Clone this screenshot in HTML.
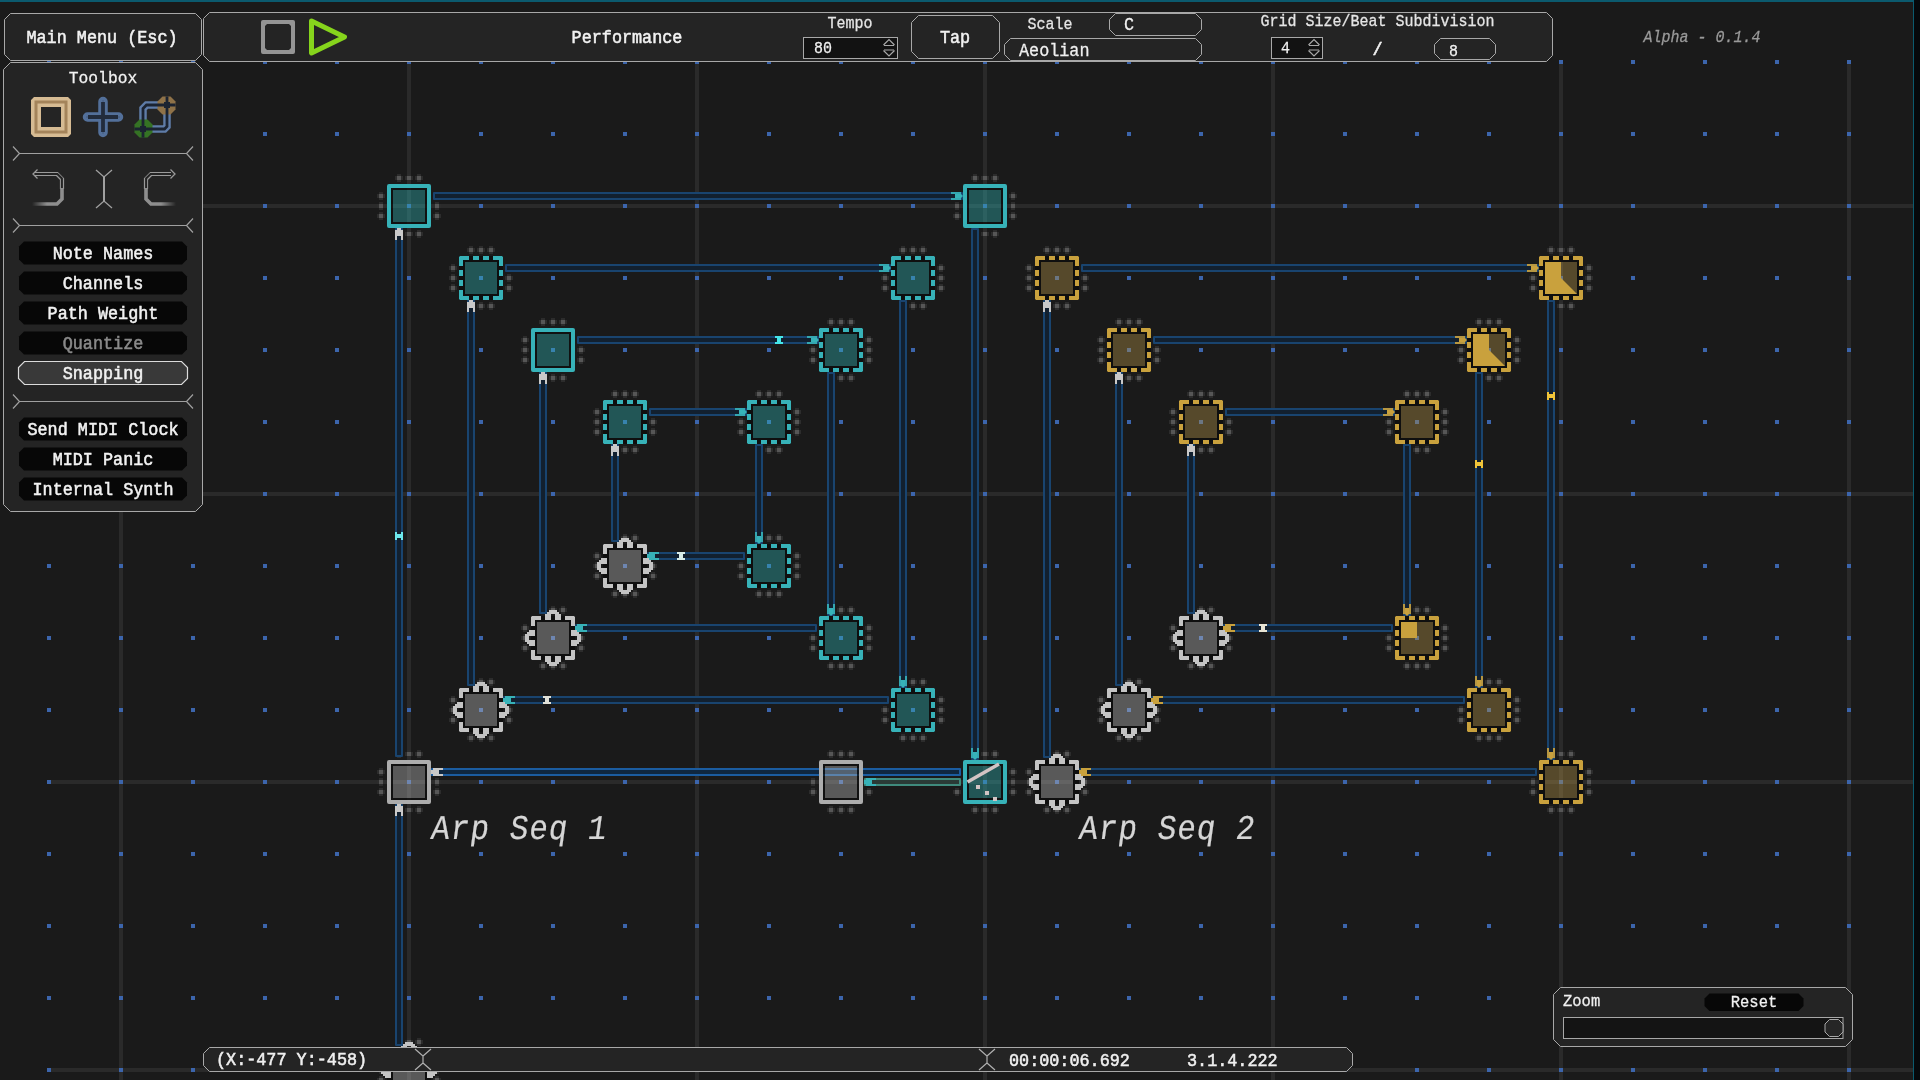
<!DOCTYPE html><html><head><meta charset="utf-8"><style>html,body{margin:0;padding:0;background:#1a1a1a;width:1920px;height:1080px;overflow:hidden}svg{display:block}text{font-family:"Liberation Mono",monospace;white-space:pre}svg{will-change:transform}</style></head><body>
<svg width="1920" height="1080" viewBox="0 0 1920 1080">
<rect x="0" y="0" width="1920" height="1080" fill="#1a1a1a" />
<g shape-rendering="crispEdges">
<rect x="119" y="60" width="4" height="1020" fill="#2a2a2a" />
<rect x="407" y="60" width="4" height="1020" fill="#2a2a2a" />
<rect x="695" y="60" width="4" height="1020" fill="#2a2a2a" />
<rect x="983" y="60" width="4" height="1020" fill="#2a2a2a" />
<rect x="1271" y="60" width="4" height="1020" fill="#2a2a2a" />
<rect x="1559" y="60" width="4" height="1020" fill="#2a2a2a" />
<rect x="1847" y="60" width="4" height="1020" fill="#2a2a2a" />
<rect x="47" y="204" width="1866" height="4" fill="#2a2a2a" />
<rect x="47" y="492" width="1866" height="4" fill="#2a2a2a" />
<rect x="47" y="780" width="1866" height="4" fill="#2a2a2a" />
<rect x="47" y="1068" width="1866" height="4" fill="#2a2a2a" />
<rect x="47" y="60" width="4" height="4" fill="#3c65ac" />
<rect x="47" y="132" width="4" height="4" fill="#3c65ac" />
<rect x="47" y="204" width="4" height="4" fill="#3c65ac" />
<rect x="47" y="276" width="4" height="4" fill="#3c65ac" />
<rect x="47" y="348" width="4" height="4" fill="#3c65ac" />
<rect x="47" y="420" width="4" height="4" fill="#3c65ac" />
<rect x="47" y="492" width="4" height="4" fill="#3c65ac" />
<rect x="47" y="564" width="4" height="4" fill="#3c65ac" />
<rect x="47" y="636" width="4" height="4" fill="#3c65ac" />
<rect x="47" y="708" width="4" height="4" fill="#3c65ac" />
<rect x="47" y="780" width="4" height="4" fill="#3c65ac" />
<rect x="47" y="852" width="4" height="4" fill="#3c65ac" />
<rect x="47" y="924" width="4" height="4" fill="#3c65ac" />
<rect x="47" y="996" width="4" height="4" fill="#3c65ac" />
<rect x="47" y="1068" width="4" height="4" fill="#3c65ac" />
<rect x="119" y="60" width="4" height="4" fill="#3c65ac" />
<rect x="119" y="132" width="4" height="4" fill="#3c65ac" />
<rect x="119" y="204" width="4" height="4" fill="#3c65ac" />
<rect x="119" y="276" width="4" height="4" fill="#3c65ac" />
<rect x="119" y="348" width="4" height="4" fill="#3c65ac" />
<rect x="119" y="420" width="4" height="4" fill="#3c65ac" />
<rect x="119" y="492" width="4" height="4" fill="#3c65ac" />
<rect x="119" y="564" width="4" height="4" fill="#3c65ac" />
<rect x="119" y="636" width="4" height="4" fill="#3c65ac" />
<rect x="119" y="708" width="4" height="4" fill="#3c65ac" />
<rect x="119" y="780" width="4" height="4" fill="#3c65ac" />
<rect x="119" y="852" width="4" height="4" fill="#3c65ac" />
<rect x="119" y="924" width="4" height="4" fill="#3c65ac" />
<rect x="119" y="996" width="4" height="4" fill="#3c65ac" />
<rect x="119" y="1068" width="4" height="4" fill="#3c65ac" />
<rect x="191" y="60" width="4" height="4" fill="#3c65ac" />
<rect x="191" y="132" width="4" height="4" fill="#3c65ac" />
<rect x="191" y="204" width="4" height="4" fill="#3c65ac" />
<rect x="191" y="276" width="4" height="4" fill="#3c65ac" />
<rect x="191" y="348" width="4" height="4" fill="#3c65ac" />
<rect x="191" y="420" width="4" height="4" fill="#3c65ac" />
<rect x="191" y="492" width="4" height="4" fill="#3c65ac" />
<rect x="191" y="564" width="4" height="4" fill="#3c65ac" />
<rect x="191" y="636" width="4" height="4" fill="#3c65ac" />
<rect x="191" y="708" width="4" height="4" fill="#3c65ac" />
<rect x="191" y="780" width="4" height="4" fill="#3c65ac" />
<rect x="191" y="852" width="4" height="4" fill="#3c65ac" />
<rect x="191" y="924" width="4" height="4" fill="#3c65ac" />
<rect x="191" y="996" width="4" height="4" fill="#3c65ac" />
<rect x="191" y="1068" width="4" height="4" fill="#3c65ac" />
<rect x="263" y="60" width="4" height="4" fill="#3c65ac" />
<rect x="263" y="132" width="4" height="4" fill="#3c65ac" />
<rect x="263" y="204" width="4" height="4" fill="#3c65ac" />
<rect x="263" y="276" width="4" height="4" fill="#3c65ac" />
<rect x="263" y="348" width="4" height="4" fill="#3c65ac" />
<rect x="263" y="420" width="4" height="4" fill="#3c65ac" />
<rect x="263" y="492" width="4" height="4" fill="#3c65ac" />
<rect x="263" y="564" width="4" height="4" fill="#3c65ac" />
<rect x="263" y="636" width="4" height="4" fill="#3c65ac" />
<rect x="263" y="708" width="4" height="4" fill="#3c65ac" />
<rect x="263" y="780" width="4" height="4" fill="#3c65ac" />
<rect x="263" y="852" width="4" height="4" fill="#3c65ac" />
<rect x="263" y="924" width="4" height="4" fill="#3c65ac" />
<rect x="263" y="996" width="4" height="4" fill="#3c65ac" />
<rect x="263" y="1068" width="4" height="4" fill="#3c65ac" />
<rect x="335" y="60" width="4" height="4" fill="#3c65ac" />
<rect x="335" y="132" width="4" height="4" fill="#3c65ac" />
<rect x="335" y="204" width="4" height="4" fill="#3c65ac" />
<rect x="335" y="276" width="4" height="4" fill="#3c65ac" />
<rect x="335" y="348" width="4" height="4" fill="#3c65ac" />
<rect x="335" y="420" width="4" height="4" fill="#3c65ac" />
<rect x="335" y="492" width="4" height="4" fill="#3c65ac" />
<rect x="335" y="564" width="4" height="4" fill="#3c65ac" />
<rect x="335" y="636" width="4" height="4" fill="#3c65ac" />
<rect x="335" y="708" width="4" height="4" fill="#3c65ac" />
<rect x="335" y="780" width="4" height="4" fill="#3c65ac" />
<rect x="335" y="852" width="4" height="4" fill="#3c65ac" />
<rect x="335" y="924" width="4" height="4" fill="#3c65ac" />
<rect x="335" y="996" width="4" height="4" fill="#3c65ac" />
<rect x="335" y="1068" width="4" height="4" fill="#3c65ac" />
<rect x="407" y="60" width="4" height="4" fill="#3c65ac" />
<rect x="407" y="132" width="4" height="4" fill="#3c65ac" />
<rect x="407" y="204" width="4" height="4" fill="#3c65ac" />
<rect x="407" y="276" width="4" height="4" fill="#3c65ac" />
<rect x="407" y="348" width="4" height="4" fill="#3c65ac" />
<rect x="407" y="420" width="4" height="4" fill="#3c65ac" />
<rect x="407" y="492" width="4" height="4" fill="#3c65ac" />
<rect x="407" y="564" width="4" height="4" fill="#3c65ac" />
<rect x="407" y="636" width="4" height="4" fill="#3c65ac" />
<rect x="407" y="708" width="4" height="4" fill="#3c65ac" />
<rect x="407" y="780" width="4" height="4" fill="#3c65ac" />
<rect x="407" y="852" width="4" height="4" fill="#3c65ac" />
<rect x="407" y="924" width="4" height="4" fill="#3c65ac" />
<rect x="407" y="996" width="4" height="4" fill="#3c65ac" />
<rect x="407" y="1068" width="4" height="4" fill="#3c65ac" />
<rect x="479" y="60" width="4" height="4" fill="#3c65ac" />
<rect x="479" y="132" width="4" height="4" fill="#3c65ac" />
<rect x="479" y="204" width="4" height="4" fill="#3c65ac" />
<rect x="479" y="276" width="4" height="4" fill="#3c65ac" />
<rect x="479" y="348" width="4" height="4" fill="#3c65ac" />
<rect x="479" y="420" width="4" height="4" fill="#3c65ac" />
<rect x="479" y="492" width="4" height="4" fill="#3c65ac" />
<rect x="479" y="564" width="4" height="4" fill="#3c65ac" />
<rect x="479" y="636" width="4" height="4" fill="#3c65ac" />
<rect x="479" y="708" width="4" height="4" fill="#3c65ac" />
<rect x="479" y="780" width="4" height="4" fill="#3c65ac" />
<rect x="479" y="852" width="4" height="4" fill="#3c65ac" />
<rect x="479" y="924" width="4" height="4" fill="#3c65ac" />
<rect x="479" y="996" width="4" height="4" fill="#3c65ac" />
<rect x="479" y="1068" width="4" height="4" fill="#3c65ac" />
<rect x="551" y="60" width="4" height="4" fill="#3c65ac" />
<rect x="551" y="132" width="4" height="4" fill="#3c65ac" />
<rect x="551" y="204" width="4" height="4" fill="#3c65ac" />
<rect x="551" y="276" width="4" height="4" fill="#3c65ac" />
<rect x="551" y="348" width="4" height="4" fill="#3c65ac" />
<rect x="551" y="420" width="4" height="4" fill="#3c65ac" />
<rect x="551" y="492" width="4" height="4" fill="#3c65ac" />
<rect x="551" y="564" width="4" height="4" fill="#3c65ac" />
<rect x="551" y="636" width="4" height="4" fill="#3c65ac" />
<rect x="551" y="708" width="4" height="4" fill="#3c65ac" />
<rect x="551" y="780" width="4" height="4" fill="#3c65ac" />
<rect x="551" y="852" width="4" height="4" fill="#3c65ac" />
<rect x="551" y="924" width="4" height="4" fill="#3c65ac" />
<rect x="551" y="996" width="4" height="4" fill="#3c65ac" />
<rect x="551" y="1068" width="4" height="4" fill="#3c65ac" />
<rect x="623" y="60" width="4" height="4" fill="#3c65ac" />
<rect x="623" y="132" width="4" height="4" fill="#3c65ac" />
<rect x="623" y="204" width="4" height="4" fill="#3c65ac" />
<rect x="623" y="276" width="4" height="4" fill="#3c65ac" />
<rect x="623" y="348" width="4" height="4" fill="#3c65ac" />
<rect x="623" y="420" width="4" height="4" fill="#3c65ac" />
<rect x="623" y="492" width="4" height="4" fill="#3c65ac" />
<rect x="623" y="564" width="4" height="4" fill="#3c65ac" />
<rect x="623" y="636" width="4" height="4" fill="#3c65ac" />
<rect x="623" y="708" width="4" height="4" fill="#3c65ac" />
<rect x="623" y="780" width="4" height="4" fill="#3c65ac" />
<rect x="623" y="852" width="4" height="4" fill="#3c65ac" />
<rect x="623" y="924" width="4" height="4" fill="#3c65ac" />
<rect x="623" y="996" width="4" height="4" fill="#3c65ac" />
<rect x="623" y="1068" width="4" height="4" fill="#3c65ac" />
<rect x="695" y="60" width="4" height="4" fill="#3c65ac" />
<rect x="695" y="132" width="4" height="4" fill="#3c65ac" />
<rect x="695" y="204" width="4" height="4" fill="#3c65ac" />
<rect x="695" y="276" width="4" height="4" fill="#3c65ac" />
<rect x="695" y="348" width="4" height="4" fill="#3c65ac" />
<rect x="695" y="420" width="4" height="4" fill="#3c65ac" />
<rect x="695" y="492" width="4" height="4" fill="#3c65ac" />
<rect x="695" y="564" width="4" height="4" fill="#3c65ac" />
<rect x="695" y="636" width="4" height="4" fill="#3c65ac" />
<rect x="695" y="708" width="4" height="4" fill="#3c65ac" />
<rect x="695" y="780" width="4" height="4" fill="#3c65ac" />
<rect x="695" y="852" width="4" height="4" fill="#3c65ac" />
<rect x="695" y="924" width="4" height="4" fill="#3c65ac" />
<rect x="695" y="996" width="4" height="4" fill="#3c65ac" />
<rect x="695" y="1068" width="4" height="4" fill="#3c65ac" />
<rect x="767" y="60" width="4" height="4" fill="#3c65ac" />
<rect x="767" y="132" width="4" height="4" fill="#3c65ac" />
<rect x="767" y="204" width="4" height="4" fill="#3c65ac" />
<rect x="767" y="276" width="4" height="4" fill="#3c65ac" />
<rect x="767" y="348" width="4" height="4" fill="#3c65ac" />
<rect x="767" y="420" width="4" height="4" fill="#3c65ac" />
<rect x="767" y="492" width="4" height="4" fill="#3c65ac" />
<rect x="767" y="564" width="4" height="4" fill="#3c65ac" />
<rect x="767" y="636" width="4" height="4" fill="#3c65ac" />
<rect x="767" y="708" width="4" height="4" fill="#3c65ac" />
<rect x="767" y="780" width="4" height="4" fill="#3c65ac" />
<rect x="767" y="852" width="4" height="4" fill="#3c65ac" />
<rect x="767" y="924" width="4" height="4" fill="#3c65ac" />
<rect x="767" y="996" width="4" height="4" fill="#3c65ac" />
<rect x="767" y="1068" width="4" height="4" fill="#3c65ac" />
<rect x="839" y="60" width="4" height="4" fill="#3c65ac" />
<rect x="839" y="132" width="4" height="4" fill="#3c65ac" />
<rect x="839" y="204" width="4" height="4" fill="#3c65ac" />
<rect x="839" y="276" width="4" height="4" fill="#3c65ac" />
<rect x="839" y="348" width="4" height="4" fill="#3c65ac" />
<rect x="839" y="420" width="4" height="4" fill="#3c65ac" />
<rect x="839" y="492" width="4" height="4" fill="#3c65ac" />
<rect x="839" y="564" width="4" height="4" fill="#3c65ac" />
<rect x="839" y="636" width="4" height="4" fill="#3c65ac" />
<rect x="839" y="708" width="4" height="4" fill="#3c65ac" />
<rect x="839" y="780" width="4" height="4" fill="#3c65ac" />
<rect x="839" y="852" width="4" height="4" fill="#3c65ac" />
<rect x="839" y="924" width="4" height="4" fill="#3c65ac" />
<rect x="839" y="996" width="4" height="4" fill="#3c65ac" />
<rect x="839" y="1068" width="4" height="4" fill="#3c65ac" />
<rect x="911" y="60" width="4" height="4" fill="#3c65ac" />
<rect x="911" y="132" width="4" height="4" fill="#3c65ac" />
<rect x="911" y="204" width="4" height="4" fill="#3c65ac" />
<rect x="911" y="276" width="4" height="4" fill="#3c65ac" />
<rect x="911" y="348" width="4" height="4" fill="#3c65ac" />
<rect x="911" y="420" width="4" height="4" fill="#3c65ac" />
<rect x="911" y="492" width="4" height="4" fill="#3c65ac" />
<rect x="911" y="564" width="4" height="4" fill="#3c65ac" />
<rect x="911" y="636" width="4" height="4" fill="#3c65ac" />
<rect x="911" y="708" width="4" height="4" fill="#3c65ac" />
<rect x="911" y="780" width="4" height="4" fill="#3c65ac" />
<rect x="911" y="852" width="4" height="4" fill="#3c65ac" />
<rect x="911" y="924" width="4" height="4" fill="#3c65ac" />
<rect x="911" y="996" width="4" height="4" fill="#3c65ac" />
<rect x="911" y="1068" width="4" height="4" fill="#3c65ac" />
<rect x="983" y="60" width="4" height="4" fill="#3c65ac" />
<rect x="983" y="132" width="4" height="4" fill="#3c65ac" />
<rect x="983" y="204" width="4" height="4" fill="#3c65ac" />
<rect x="983" y="276" width="4" height="4" fill="#3c65ac" />
<rect x="983" y="348" width="4" height="4" fill="#3c65ac" />
<rect x="983" y="420" width="4" height="4" fill="#3c65ac" />
<rect x="983" y="492" width="4" height="4" fill="#3c65ac" />
<rect x="983" y="564" width="4" height="4" fill="#3c65ac" />
<rect x="983" y="636" width="4" height="4" fill="#3c65ac" />
<rect x="983" y="708" width="4" height="4" fill="#3c65ac" />
<rect x="983" y="780" width="4" height="4" fill="#3c65ac" />
<rect x="983" y="852" width="4" height="4" fill="#3c65ac" />
<rect x="983" y="924" width="4" height="4" fill="#3c65ac" />
<rect x="983" y="996" width="4" height="4" fill="#3c65ac" />
<rect x="983" y="1068" width="4" height="4" fill="#3c65ac" />
<rect x="1055" y="60" width="4" height="4" fill="#3c65ac" />
<rect x="1055" y="132" width="4" height="4" fill="#3c65ac" />
<rect x="1055" y="204" width="4" height="4" fill="#3c65ac" />
<rect x="1055" y="276" width="4" height="4" fill="#3c65ac" />
<rect x="1055" y="348" width="4" height="4" fill="#3c65ac" />
<rect x="1055" y="420" width="4" height="4" fill="#3c65ac" />
<rect x="1055" y="492" width="4" height="4" fill="#3c65ac" />
<rect x="1055" y="564" width="4" height="4" fill="#3c65ac" />
<rect x="1055" y="636" width="4" height="4" fill="#3c65ac" />
<rect x="1055" y="708" width="4" height="4" fill="#3c65ac" />
<rect x="1055" y="780" width="4" height="4" fill="#3c65ac" />
<rect x="1055" y="852" width="4" height="4" fill="#3c65ac" />
<rect x="1055" y="924" width="4" height="4" fill="#3c65ac" />
<rect x="1055" y="996" width="4" height="4" fill="#3c65ac" />
<rect x="1055" y="1068" width="4" height="4" fill="#3c65ac" />
<rect x="1127" y="60" width="4" height="4" fill="#3c65ac" />
<rect x="1127" y="132" width="4" height="4" fill="#3c65ac" />
<rect x="1127" y="204" width="4" height="4" fill="#3c65ac" />
<rect x="1127" y="276" width="4" height="4" fill="#3c65ac" />
<rect x="1127" y="348" width="4" height="4" fill="#3c65ac" />
<rect x="1127" y="420" width="4" height="4" fill="#3c65ac" />
<rect x="1127" y="492" width="4" height="4" fill="#3c65ac" />
<rect x="1127" y="564" width="4" height="4" fill="#3c65ac" />
<rect x="1127" y="636" width="4" height="4" fill="#3c65ac" />
<rect x="1127" y="708" width="4" height="4" fill="#3c65ac" />
<rect x="1127" y="780" width="4" height="4" fill="#3c65ac" />
<rect x="1127" y="852" width="4" height="4" fill="#3c65ac" />
<rect x="1127" y="924" width="4" height="4" fill="#3c65ac" />
<rect x="1127" y="996" width="4" height="4" fill="#3c65ac" />
<rect x="1127" y="1068" width="4" height="4" fill="#3c65ac" />
<rect x="1199" y="60" width="4" height="4" fill="#3c65ac" />
<rect x="1199" y="132" width="4" height="4" fill="#3c65ac" />
<rect x="1199" y="204" width="4" height="4" fill="#3c65ac" />
<rect x="1199" y="276" width="4" height="4" fill="#3c65ac" />
<rect x="1199" y="348" width="4" height="4" fill="#3c65ac" />
<rect x="1199" y="420" width="4" height="4" fill="#3c65ac" />
<rect x="1199" y="492" width="4" height="4" fill="#3c65ac" />
<rect x="1199" y="564" width="4" height="4" fill="#3c65ac" />
<rect x="1199" y="636" width="4" height="4" fill="#3c65ac" />
<rect x="1199" y="708" width="4" height="4" fill="#3c65ac" />
<rect x="1199" y="780" width="4" height="4" fill="#3c65ac" />
<rect x="1199" y="852" width="4" height="4" fill="#3c65ac" />
<rect x="1199" y="924" width="4" height="4" fill="#3c65ac" />
<rect x="1199" y="996" width="4" height="4" fill="#3c65ac" />
<rect x="1199" y="1068" width="4" height="4" fill="#3c65ac" />
<rect x="1271" y="60" width="4" height="4" fill="#3c65ac" />
<rect x="1271" y="132" width="4" height="4" fill="#3c65ac" />
<rect x="1271" y="204" width="4" height="4" fill="#3c65ac" />
<rect x="1271" y="276" width="4" height="4" fill="#3c65ac" />
<rect x="1271" y="348" width="4" height="4" fill="#3c65ac" />
<rect x="1271" y="420" width="4" height="4" fill="#3c65ac" />
<rect x="1271" y="492" width="4" height="4" fill="#3c65ac" />
<rect x="1271" y="564" width="4" height="4" fill="#3c65ac" />
<rect x="1271" y="636" width="4" height="4" fill="#3c65ac" />
<rect x="1271" y="708" width="4" height="4" fill="#3c65ac" />
<rect x="1271" y="780" width="4" height="4" fill="#3c65ac" />
<rect x="1271" y="852" width="4" height="4" fill="#3c65ac" />
<rect x="1271" y="924" width="4" height="4" fill="#3c65ac" />
<rect x="1271" y="996" width="4" height="4" fill="#3c65ac" />
<rect x="1271" y="1068" width="4" height="4" fill="#3c65ac" />
<rect x="1343" y="60" width="4" height="4" fill="#3c65ac" />
<rect x="1343" y="132" width="4" height="4" fill="#3c65ac" />
<rect x="1343" y="204" width="4" height="4" fill="#3c65ac" />
<rect x="1343" y="276" width="4" height="4" fill="#3c65ac" />
<rect x="1343" y="348" width="4" height="4" fill="#3c65ac" />
<rect x="1343" y="420" width="4" height="4" fill="#3c65ac" />
<rect x="1343" y="492" width="4" height="4" fill="#3c65ac" />
<rect x="1343" y="564" width="4" height="4" fill="#3c65ac" />
<rect x="1343" y="636" width="4" height="4" fill="#3c65ac" />
<rect x="1343" y="708" width="4" height="4" fill="#3c65ac" />
<rect x="1343" y="780" width="4" height="4" fill="#3c65ac" />
<rect x="1343" y="852" width="4" height="4" fill="#3c65ac" />
<rect x="1343" y="924" width="4" height="4" fill="#3c65ac" />
<rect x="1343" y="996" width="4" height="4" fill="#3c65ac" />
<rect x="1343" y="1068" width="4" height="4" fill="#3c65ac" />
<rect x="1415" y="60" width="4" height="4" fill="#3c65ac" />
<rect x="1415" y="132" width="4" height="4" fill="#3c65ac" />
<rect x="1415" y="204" width="4" height="4" fill="#3c65ac" />
<rect x="1415" y="276" width="4" height="4" fill="#3c65ac" />
<rect x="1415" y="348" width="4" height="4" fill="#3c65ac" />
<rect x="1415" y="420" width="4" height="4" fill="#3c65ac" />
<rect x="1415" y="492" width="4" height="4" fill="#3c65ac" />
<rect x="1415" y="564" width="4" height="4" fill="#3c65ac" />
<rect x="1415" y="636" width="4" height="4" fill="#3c65ac" />
<rect x="1415" y="708" width="4" height="4" fill="#3c65ac" />
<rect x="1415" y="780" width="4" height="4" fill="#3c65ac" />
<rect x="1415" y="852" width="4" height="4" fill="#3c65ac" />
<rect x="1415" y="924" width="4" height="4" fill="#3c65ac" />
<rect x="1415" y="996" width="4" height="4" fill="#3c65ac" />
<rect x="1415" y="1068" width="4" height="4" fill="#3c65ac" />
<rect x="1487" y="60" width="4" height="4" fill="#3c65ac" />
<rect x="1487" y="132" width="4" height="4" fill="#3c65ac" />
<rect x="1487" y="204" width="4" height="4" fill="#3c65ac" />
<rect x="1487" y="276" width="4" height="4" fill="#3c65ac" />
<rect x="1487" y="348" width="4" height="4" fill="#3c65ac" />
<rect x="1487" y="420" width="4" height="4" fill="#3c65ac" />
<rect x="1487" y="492" width="4" height="4" fill="#3c65ac" />
<rect x="1487" y="564" width="4" height="4" fill="#3c65ac" />
<rect x="1487" y="636" width="4" height="4" fill="#3c65ac" />
<rect x="1487" y="708" width="4" height="4" fill="#3c65ac" />
<rect x="1487" y="780" width="4" height="4" fill="#3c65ac" />
<rect x="1487" y="852" width="4" height="4" fill="#3c65ac" />
<rect x="1487" y="924" width="4" height="4" fill="#3c65ac" />
<rect x="1487" y="996" width="4" height="4" fill="#3c65ac" />
<rect x="1487" y="1068" width="4" height="4" fill="#3c65ac" />
<rect x="1559" y="60" width="4" height="4" fill="#3c65ac" />
<rect x="1559" y="132" width="4" height="4" fill="#3c65ac" />
<rect x="1559" y="204" width="4" height="4" fill="#3c65ac" />
<rect x="1559" y="276" width="4" height="4" fill="#3c65ac" />
<rect x="1559" y="348" width="4" height="4" fill="#3c65ac" />
<rect x="1559" y="420" width="4" height="4" fill="#3c65ac" />
<rect x="1559" y="492" width="4" height="4" fill="#3c65ac" />
<rect x="1559" y="564" width="4" height="4" fill="#3c65ac" />
<rect x="1559" y="636" width="4" height="4" fill="#3c65ac" />
<rect x="1559" y="708" width="4" height="4" fill="#3c65ac" />
<rect x="1559" y="780" width="4" height="4" fill="#3c65ac" />
<rect x="1559" y="852" width="4" height="4" fill="#3c65ac" />
<rect x="1559" y="924" width="4" height="4" fill="#3c65ac" />
<rect x="1559" y="996" width="4" height="4" fill="#3c65ac" />
<rect x="1559" y="1068" width="4" height="4" fill="#3c65ac" />
<rect x="1631" y="60" width="4" height="4" fill="#3c65ac" />
<rect x="1631" y="132" width="4" height="4" fill="#3c65ac" />
<rect x="1631" y="204" width="4" height="4" fill="#3c65ac" />
<rect x="1631" y="276" width="4" height="4" fill="#3c65ac" />
<rect x="1631" y="348" width="4" height="4" fill="#3c65ac" />
<rect x="1631" y="420" width="4" height="4" fill="#3c65ac" />
<rect x="1631" y="492" width="4" height="4" fill="#3c65ac" />
<rect x="1631" y="564" width="4" height="4" fill="#3c65ac" />
<rect x="1631" y="636" width="4" height="4" fill="#3c65ac" />
<rect x="1631" y="708" width="4" height="4" fill="#3c65ac" />
<rect x="1631" y="780" width="4" height="4" fill="#3c65ac" />
<rect x="1631" y="852" width="4" height="4" fill="#3c65ac" />
<rect x="1631" y="924" width="4" height="4" fill="#3c65ac" />
<rect x="1631" y="996" width="4" height="4" fill="#3c65ac" />
<rect x="1631" y="1068" width="4" height="4" fill="#3c65ac" />
<rect x="1703" y="60" width="4" height="4" fill="#3c65ac" />
<rect x="1703" y="132" width="4" height="4" fill="#3c65ac" />
<rect x="1703" y="204" width="4" height="4" fill="#3c65ac" />
<rect x="1703" y="276" width="4" height="4" fill="#3c65ac" />
<rect x="1703" y="348" width="4" height="4" fill="#3c65ac" />
<rect x="1703" y="420" width="4" height="4" fill="#3c65ac" />
<rect x="1703" y="492" width="4" height="4" fill="#3c65ac" />
<rect x="1703" y="564" width="4" height="4" fill="#3c65ac" />
<rect x="1703" y="636" width="4" height="4" fill="#3c65ac" />
<rect x="1703" y="708" width="4" height="4" fill="#3c65ac" />
<rect x="1703" y="780" width="4" height="4" fill="#3c65ac" />
<rect x="1703" y="852" width="4" height="4" fill="#3c65ac" />
<rect x="1703" y="924" width="4" height="4" fill="#3c65ac" />
<rect x="1703" y="996" width="4" height="4" fill="#3c65ac" />
<rect x="1703" y="1068" width="4" height="4" fill="#3c65ac" />
<rect x="1775" y="60" width="4" height="4" fill="#3c65ac" />
<rect x="1775" y="132" width="4" height="4" fill="#3c65ac" />
<rect x="1775" y="204" width="4" height="4" fill="#3c65ac" />
<rect x="1775" y="276" width="4" height="4" fill="#3c65ac" />
<rect x="1775" y="348" width="4" height="4" fill="#3c65ac" />
<rect x="1775" y="420" width="4" height="4" fill="#3c65ac" />
<rect x="1775" y="492" width="4" height="4" fill="#3c65ac" />
<rect x="1775" y="564" width="4" height="4" fill="#3c65ac" />
<rect x="1775" y="636" width="4" height="4" fill="#3c65ac" />
<rect x="1775" y="708" width="4" height="4" fill="#3c65ac" />
<rect x="1775" y="780" width="4" height="4" fill="#3c65ac" />
<rect x="1775" y="852" width="4" height="4" fill="#3c65ac" />
<rect x="1775" y="924" width="4" height="4" fill="#3c65ac" />
<rect x="1775" y="996" width="4" height="4" fill="#3c65ac" />
<rect x="1775" y="1068" width="4" height="4" fill="#3c65ac" />
<rect x="1847" y="60" width="4" height="4" fill="#3c65ac" />
<rect x="1847" y="132" width="4" height="4" fill="#3c65ac" />
<rect x="1847" y="204" width="4" height="4" fill="#3c65ac" />
<rect x="1847" y="276" width="4" height="4" fill="#3c65ac" />
<rect x="1847" y="348" width="4" height="4" fill="#3c65ac" />
<rect x="1847" y="420" width="4" height="4" fill="#3c65ac" />
<rect x="1847" y="492" width="4" height="4" fill="#3c65ac" />
<rect x="1847" y="564" width="4" height="4" fill="#3c65ac" />
<rect x="1847" y="636" width="4" height="4" fill="#3c65ac" />
<rect x="1847" y="708" width="4" height="4" fill="#3c65ac" />
<rect x="1847" y="780" width="4" height="4" fill="#3c65ac" />
<rect x="1847" y="852" width="4" height="4" fill="#3c65ac" />
<rect x="1847" y="924" width="4" height="4" fill="#3c65ac" />
<rect x="1847" y="996" width="4" height="4" fill="#3c65ac" />
<rect x="1847" y="1068" width="4" height="4" fill="#3c65ac" />
<rect x="1919" y="60" width="4" height="4" fill="#3c65ac" />
<rect x="1919" y="132" width="4" height="4" fill="#3c65ac" />
<rect x="1919" y="204" width="4" height="4" fill="#3c65ac" />
<rect x="1919" y="276" width="4" height="4" fill="#3c65ac" />
<rect x="1919" y="348" width="4" height="4" fill="#3c65ac" />
<rect x="1919" y="420" width="4" height="4" fill="#3c65ac" />
<rect x="1919" y="492" width="4" height="4" fill="#3c65ac" />
<rect x="1919" y="564" width="4" height="4" fill="#3c65ac" />
<rect x="1919" y="636" width="4" height="4" fill="#3c65ac" />
<rect x="1919" y="708" width="4" height="4" fill="#3c65ac" />
<rect x="1919" y="780" width="4" height="4" fill="#3c65ac" />
<rect x="1919" y="852" width="4" height="4" fill="#3c65ac" />
<rect x="1919" y="924" width="4" height="4" fill="#3c65ac" />
<rect x="1919" y="996" width="4" height="4" fill="#3c65ac" />
<rect x="1919" y="1068" width="4" height="4" fill="#3c65ac" />
</g>
<rect x="395" y="176" width="8" height="4" fill="#2c2c2c" />
<rect x="397" y="174" width="4" height="8" fill="#2c2c2c" />
<rect x="397" y="176" width="4" height="4" fill="#565656" />
<rect x="405" y="176" width="8" height="4" fill="#2c2c2c" />
<rect x="407" y="174" width="4" height="8" fill="#2c2c2c" />
<rect x="407" y="176" width="4" height="4" fill="#565656" />
<rect x="415" y="176" width="8" height="4" fill="#2c2c2c" />
<rect x="417" y="174" width="4" height="8" fill="#2c2c2c" />
<rect x="417" y="176" width="4" height="4" fill="#565656" />
<rect x="395" y="232" width="8" height="4" fill="#2c2c2c" />
<rect x="397" y="230" width="4" height="8" fill="#2c2c2c" />
<rect x="397" y="232" width="4" height="4" fill="#565656" />
<rect x="405" y="232" width="8" height="4" fill="#2c2c2c" />
<rect x="407" y="230" width="4" height="8" fill="#2c2c2c" />
<rect x="407" y="232" width="4" height="4" fill="#565656" />
<rect x="415" y="232" width="8" height="4" fill="#2c2c2c" />
<rect x="417" y="230" width="4" height="8" fill="#2c2c2c" />
<rect x="417" y="232" width="4" height="4" fill="#565656" />
<rect x="377" y="194" width="8" height="4" fill="#2c2c2c" />
<rect x="379" y="192" width="4" height="8" fill="#2c2c2c" />
<rect x="379" y="194" width="4" height="4" fill="#565656" />
<rect x="377" y="204" width="8" height="4" fill="#2c2c2c" />
<rect x="379" y="202" width="4" height="8" fill="#2c2c2c" />
<rect x="379" y="204" width="4" height="4" fill="#565656" />
<rect x="377" y="214" width="8" height="4" fill="#2c2c2c" />
<rect x="379" y="212" width="4" height="8" fill="#2c2c2c" />
<rect x="379" y="214" width="4" height="4" fill="#565656" />
<rect x="433" y="194" width="8" height="4" fill="#2c2c2c" />
<rect x="435" y="192" width="4" height="8" fill="#2c2c2c" />
<rect x="435" y="194" width="4" height="4" fill="#565656" />
<rect x="433" y="204" width="8" height="4" fill="#2c2c2c" />
<rect x="435" y="202" width="4" height="8" fill="#2c2c2c" />
<rect x="435" y="204" width="4" height="4" fill="#565656" />
<rect x="433" y="214" width="8" height="4" fill="#2c2c2c" />
<rect x="435" y="212" width="4" height="8" fill="#2c2c2c" />
<rect x="435" y="214" width="4" height="4" fill="#565656" />
<rect x="971" y="176" width="8" height="4" fill="#2c2c2c" />
<rect x="973" y="174" width="4" height="8" fill="#2c2c2c" />
<rect x="973" y="176" width="4" height="4" fill="#565656" />
<rect x="981" y="176" width="8" height="4" fill="#2c2c2c" />
<rect x="983" y="174" width="4" height="8" fill="#2c2c2c" />
<rect x="983" y="176" width="4" height="4" fill="#565656" />
<rect x="991" y="176" width="8" height="4" fill="#2c2c2c" />
<rect x="993" y="174" width="4" height="8" fill="#2c2c2c" />
<rect x="993" y="176" width="4" height="4" fill="#565656" />
<rect x="971" y="232" width="8" height="4" fill="#2c2c2c" />
<rect x="973" y="230" width="4" height="8" fill="#2c2c2c" />
<rect x="973" y="232" width="4" height="4" fill="#565656" />
<rect x="981" y="232" width="8" height="4" fill="#2c2c2c" />
<rect x="983" y="230" width="4" height="8" fill="#2c2c2c" />
<rect x="983" y="232" width="4" height="4" fill="#565656" />
<rect x="991" y="232" width="8" height="4" fill="#2c2c2c" />
<rect x="993" y="230" width="4" height="8" fill="#2c2c2c" />
<rect x="993" y="232" width="4" height="4" fill="#565656" />
<rect x="953" y="194" width="8" height="4" fill="#2c2c2c" />
<rect x="955" y="192" width="4" height="8" fill="#2c2c2c" />
<rect x="955" y="194" width="4" height="4" fill="#565656" />
<rect x="953" y="204" width="8" height="4" fill="#2c2c2c" />
<rect x="955" y="202" width="4" height="8" fill="#2c2c2c" />
<rect x="955" y="204" width="4" height="4" fill="#565656" />
<rect x="953" y="214" width="8" height="4" fill="#2c2c2c" />
<rect x="955" y="212" width="4" height="8" fill="#2c2c2c" />
<rect x="955" y="214" width="4" height="4" fill="#565656" />
<rect x="1009" y="194" width="8" height="4" fill="#2c2c2c" />
<rect x="1011" y="192" width="4" height="8" fill="#2c2c2c" />
<rect x="1011" y="194" width="4" height="4" fill="#565656" />
<rect x="1009" y="204" width="8" height="4" fill="#2c2c2c" />
<rect x="1011" y="202" width="4" height="8" fill="#2c2c2c" />
<rect x="1011" y="204" width="4" height="4" fill="#565656" />
<rect x="1009" y="214" width="8" height="4" fill="#2c2c2c" />
<rect x="1011" y="212" width="4" height="8" fill="#2c2c2c" />
<rect x="1011" y="214" width="4" height="4" fill="#565656" />
<rect x="539" y="320" width="8" height="4" fill="#2c2c2c" />
<rect x="541" y="318" width="4" height="8" fill="#2c2c2c" />
<rect x="541" y="320" width="4" height="4" fill="#565656" />
<rect x="549" y="320" width="8" height="4" fill="#2c2c2c" />
<rect x="551" y="318" width="4" height="8" fill="#2c2c2c" />
<rect x="551" y="320" width="4" height="4" fill="#565656" />
<rect x="559" y="320" width="8" height="4" fill="#2c2c2c" />
<rect x="561" y="318" width="4" height="8" fill="#2c2c2c" />
<rect x="561" y="320" width="4" height="4" fill="#565656" />
<rect x="539" y="376" width="8" height="4" fill="#2c2c2c" />
<rect x="541" y="374" width="4" height="8" fill="#2c2c2c" />
<rect x="541" y="376" width="4" height="4" fill="#565656" />
<rect x="549" y="376" width="8" height="4" fill="#2c2c2c" />
<rect x="551" y="374" width="4" height="8" fill="#2c2c2c" />
<rect x="551" y="376" width="4" height="4" fill="#565656" />
<rect x="559" y="376" width="8" height="4" fill="#2c2c2c" />
<rect x="561" y="374" width="4" height="8" fill="#2c2c2c" />
<rect x="561" y="376" width="4" height="4" fill="#565656" />
<rect x="521" y="338" width="8" height="4" fill="#2c2c2c" />
<rect x="523" y="336" width="4" height="8" fill="#2c2c2c" />
<rect x="523" y="338" width="4" height="4" fill="#565656" />
<rect x="521" y="348" width="8" height="4" fill="#2c2c2c" />
<rect x="523" y="346" width="4" height="8" fill="#2c2c2c" />
<rect x="523" y="348" width="4" height="4" fill="#565656" />
<rect x="521" y="358" width="8" height="4" fill="#2c2c2c" />
<rect x="523" y="356" width="4" height="8" fill="#2c2c2c" />
<rect x="523" y="358" width="4" height="4" fill="#565656" />
<rect x="577" y="338" width="8" height="4" fill="#2c2c2c" />
<rect x="579" y="336" width="4" height="8" fill="#2c2c2c" />
<rect x="579" y="338" width="4" height="4" fill="#565656" />
<rect x="577" y="348" width="8" height="4" fill="#2c2c2c" />
<rect x="579" y="346" width="4" height="8" fill="#2c2c2c" />
<rect x="579" y="348" width="4" height="4" fill="#565656" />
<rect x="577" y="358" width="8" height="4" fill="#2c2c2c" />
<rect x="579" y="356" width="4" height="8" fill="#2c2c2c" />
<rect x="579" y="358" width="4" height="4" fill="#565656" />
<rect x="467" y="248" width="8" height="4" fill="#2c2c2c" />
<rect x="469" y="246" width="4" height="8" fill="#2c2c2c" />
<rect x="469" y="248" width="4" height="4" fill="#565656" />
<rect x="477" y="248" width="8" height="4" fill="#2c2c2c" />
<rect x="479" y="246" width="4" height="8" fill="#2c2c2c" />
<rect x="479" y="248" width="4" height="4" fill="#565656" />
<rect x="487" y="248" width="8" height="4" fill="#2c2c2c" />
<rect x="489" y="246" width="4" height="8" fill="#2c2c2c" />
<rect x="489" y="248" width="4" height="4" fill="#565656" />
<rect x="467" y="304" width="8" height="4" fill="#2c2c2c" />
<rect x="469" y="302" width="4" height="8" fill="#2c2c2c" />
<rect x="469" y="304" width="4" height="4" fill="#565656" />
<rect x="477" y="304" width="8" height="4" fill="#2c2c2c" />
<rect x="479" y="302" width="4" height="8" fill="#2c2c2c" />
<rect x="479" y="304" width="4" height="4" fill="#565656" />
<rect x="487" y="304" width="8" height="4" fill="#2c2c2c" />
<rect x="489" y="302" width="4" height="8" fill="#2c2c2c" />
<rect x="489" y="304" width="4" height="4" fill="#565656" />
<rect x="449" y="266" width="8" height="4" fill="#2c2c2c" />
<rect x="451" y="264" width="4" height="8" fill="#2c2c2c" />
<rect x="451" y="266" width="4" height="4" fill="#565656" />
<rect x="449" y="276" width="8" height="4" fill="#2c2c2c" />
<rect x="451" y="274" width="4" height="8" fill="#2c2c2c" />
<rect x="451" y="276" width="4" height="4" fill="#565656" />
<rect x="449" y="286" width="8" height="4" fill="#2c2c2c" />
<rect x="451" y="284" width="4" height="8" fill="#2c2c2c" />
<rect x="451" y="286" width="4" height="4" fill="#565656" />
<rect x="505" y="266" width="8" height="4" fill="#2c2c2c" />
<rect x="507" y="264" width="4" height="8" fill="#2c2c2c" />
<rect x="507" y="266" width="4" height="4" fill="#565656" />
<rect x="505" y="276" width="8" height="4" fill="#2c2c2c" />
<rect x="507" y="274" width="4" height="8" fill="#2c2c2c" />
<rect x="507" y="276" width="4" height="4" fill="#565656" />
<rect x="505" y="286" width="8" height="4" fill="#2c2c2c" />
<rect x="507" y="284" width="4" height="8" fill="#2c2c2c" />
<rect x="507" y="286" width="4" height="4" fill="#565656" />
<rect x="899" y="248" width="8" height="4" fill="#2c2c2c" />
<rect x="901" y="246" width="4" height="8" fill="#2c2c2c" />
<rect x="901" y="248" width="4" height="4" fill="#565656" />
<rect x="909" y="248" width="8" height="4" fill="#2c2c2c" />
<rect x="911" y="246" width="4" height="8" fill="#2c2c2c" />
<rect x="911" y="248" width="4" height="4" fill="#565656" />
<rect x="919" y="248" width="8" height="4" fill="#2c2c2c" />
<rect x="921" y="246" width="4" height="8" fill="#2c2c2c" />
<rect x="921" y="248" width="4" height="4" fill="#565656" />
<rect x="899" y="304" width="8" height="4" fill="#2c2c2c" />
<rect x="901" y="302" width="4" height="8" fill="#2c2c2c" />
<rect x="901" y="304" width="4" height="4" fill="#565656" />
<rect x="909" y="304" width="8" height="4" fill="#2c2c2c" />
<rect x="911" y="302" width="4" height="8" fill="#2c2c2c" />
<rect x="911" y="304" width="4" height="4" fill="#565656" />
<rect x="919" y="304" width="8" height="4" fill="#2c2c2c" />
<rect x="921" y="302" width="4" height="8" fill="#2c2c2c" />
<rect x="921" y="304" width="4" height="4" fill="#565656" />
<rect x="881" y="266" width="8" height="4" fill="#2c2c2c" />
<rect x="883" y="264" width="4" height="8" fill="#2c2c2c" />
<rect x="883" y="266" width="4" height="4" fill="#565656" />
<rect x="881" y="276" width="8" height="4" fill="#2c2c2c" />
<rect x="883" y="274" width="4" height="8" fill="#2c2c2c" />
<rect x="883" y="276" width="4" height="4" fill="#565656" />
<rect x="881" y="286" width="8" height="4" fill="#2c2c2c" />
<rect x="883" y="284" width="4" height="8" fill="#2c2c2c" />
<rect x="883" y="286" width="4" height="4" fill="#565656" />
<rect x="937" y="266" width="8" height="4" fill="#2c2c2c" />
<rect x="939" y="264" width="4" height="8" fill="#2c2c2c" />
<rect x="939" y="266" width="4" height="4" fill="#565656" />
<rect x="937" y="276" width="8" height="4" fill="#2c2c2c" />
<rect x="939" y="274" width="4" height="8" fill="#2c2c2c" />
<rect x="939" y="276" width="4" height="4" fill="#565656" />
<rect x="937" y="286" width="8" height="4" fill="#2c2c2c" />
<rect x="939" y="284" width="4" height="8" fill="#2c2c2c" />
<rect x="939" y="286" width="4" height="4" fill="#565656" />
<rect x="827" y="320" width="8" height="4" fill="#2c2c2c" />
<rect x="829" y="318" width="4" height="8" fill="#2c2c2c" />
<rect x="829" y="320" width="4" height="4" fill="#565656" />
<rect x="837" y="320" width="8" height="4" fill="#2c2c2c" />
<rect x="839" y="318" width="4" height="8" fill="#2c2c2c" />
<rect x="839" y="320" width="4" height="4" fill="#565656" />
<rect x="847" y="320" width="8" height="4" fill="#2c2c2c" />
<rect x="849" y="318" width="4" height="8" fill="#2c2c2c" />
<rect x="849" y="320" width="4" height="4" fill="#565656" />
<rect x="827" y="376" width="8" height="4" fill="#2c2c2c" />
<rect x="829" y="374" width="4" height="8" fill="#2c2c2c" />
<rect x="829" y="376" width="4" height="4" fill="#565656" />
<rect x="837" y="376" width="8" height="4" fill="#2c2c2c" />
<rect x="839" y="374" width="4" height="8" fill="#2c2c2c" />
<rect x="839" y="376" width="4" height="4" fill="#565656" />
<rect x="847" y="376" width="8" height="4" fill="#2c2c2c" />
<rect x="849" y="374" width="4" height="8" fill="#2c2c2c" />
<rect x="849" y="376" width="4" height="4" fill="#565656" />
<rect x="809" y="338" width="8" height="4" fill="#2c2c2c" />
<rect x="811" y="336" width="4" height="8" fill="#2c2c2c" />
<rect x="811" y="338" width="4" height="4" fill="#565656" />
<rect x="809" y="348" width="8" height="4" fill="#2c2c2c" />
<rect x="811" y="346" width="4" height="8" fill="#2c2c2c" />
<rect x="811" y="348" width="4" height="4" fill="#565656" />
<rect x="809" y="358" width="8" height="4" fill="#2c2c2c" />
<rect x="811" y="356" width="4" height="8" fill="#2c2c2c" />
<rect x="811" y="358" width="4" height="4" fill="#565656" />
<rect x="865" y="338" width="8" height="4" fill="#2c2c2c" />
<rect x="867" y="336" width="4" height="8" fill="#2c2c2c" />
<rect x="867" y="338" width="4" height="4" fill="#565656" />
<rect x="865" y="348" width="8" height="4" fill="#2c2c2c" />
<rect x="867" y="346" width="4" height="8" fill="#2c2c2c" />
<rect x="867" y="348" width="4" height="4" fill="#565656" />
<rect x="865" y="358" width="8" height="4" fill="#2c2c2c" />
<rect x="867" y="356" width="4" height="8" fill="#2c2c2c" />
<rect x="867" y="358" width="4" height="4" fill="#565656" />
<rect x="611" y="392" width="8" height="4" fill="#2c2c2c" />
<rect x="613" y="390" width="4" height="8" fill="#2c2c2c" />
<rect x="613" y="392" width="4" height="4" fill="#565656" />
<rect x="621" y="392" width="8" height="4" fill="#2c2c2c" />
<rect x="623" y="390" width="4" height="8" fill="#2c2c2c" />
<rect x="623" y="392" width="4" height="4" fill="#565656" />
<rect x="631" y="392" width="8" height="4" fill="#2c2c2c" />
<rect x="633" y="390" width="4" height="8" fill="#2c2c2c" />
<rect x="633" y="392" width="4" height="4" fill="#565656" />
<rect x="611" y="448" width="8" height="4" fill="#2c2c2c" />
<rect x="613" y="446" width="4" height="8" fill="#2c2c2c" />
<rect x="613" y="448" width="4" height="4" fill="#565656" />
<rect x="621" y="448" width="8" height="4" fill="#2c2c2c" />
<rect x="623" y="446" width="4" height="8" fill="#2c2c2c" />
<rect x="623" y="448" width="4" height="4" fill="#565656" />
<rect x="631" y="448" width="8" height="4" fill="#2c2c2c" />
<rect x="633" y="446" width="4" height="8" fill="#2c2c2c" />
<rect x="633" y="448" width="4" height="4" fill="#565656" />
<rect x="593" y="410" width="8" height="4" fill="#2c2c2c" />
<rect x="595" y="408" width="4" height="8" fill="#2c2c2c" />
<rect x="595" y="410" width="4" height="4" fill="#565656" />
<rect x="593" y="420" width="8" height="4" fill="#2c2c2c" />
<rect x="595" y="418" width="4" height="8" fill="#2c2c2c" />
<rect x="595" y="420" width="4" height="4" fill="#565656" />
<rect x="593" y="430" width="8" height="4" fill="#2c2c2c" />
<rect x="595" y="428" width="4" height="8" fill="#2c2c2c" />
<rect x="595" y="430" width="4" height="4" fill="#565656" />
<rect x="649" y="410" width="8" height="4" fill="#2c2c2c" />
<rect x="651" y="408" width="4" height="8" fill="#2c2c2c" />
<rect x="651" y="410" width="4" height="4" fill="#565656" />
<rect x="649" y="420" width="8" height="4" fill="#2c2c2c" />
<rect x="651" y="418" width="4" height="8" fill="#2c2c2c" />
<rect x="651" y="420" width="4" height="4" fill="#565656" />
<rect x="649" y="430" width="8" height="4" fill="#2c2c2c" />
<rect x="651" y="428" width="4" height="8" fill="#2c2c2c" />
<rect x="651" y="430" width="4" height="4" fill="#565656" />
<rect x="755" y="392" width="8" height="4" fill="#2c2c2c" />
<rect x="757" y="390" width="4" height="8" fill="#2c2c2c" />
<rect x="757" y="392" width="4" height="4" fill="#565656" />
<rect x="765" y="392" width="8" height="4" fill="#2c2c2c" />
<rect x="767" y="390" width="4" height="8" fill="#2c2c2c" />
<rect x="767" y="392" width="4" height="4" fill="#565656" />
<rect x="775" y="392" width="8" height="4" fill="#2c2c2c" />
<rect x="777" y="390" width="4" height="8" fill="#2c2c2c" />
<rect x="777" y="392" width="4" height="4" fill="#565656" />
<rect x="755" y="448" width="8" height="4" fill="#2c2c2c" />
<rect x="757" y="446" width="4" height="8" fill="#2c2c2c" />
<rect x="757" y="448" width="4" height="4" fill="#565656" />
<rect x="765" y="448" width="8" height="4" fill="#2c2c2c" />
<rect x="767" y="446" width="4" height="8" fill="#2c2c2c" />
<rect x="767" y="448" width="4" height="4" fill="#565656" />
<rect x="775" y="448" width="8" height="4" fill="#2c2c2c" />
<rect x="777" y="446" width="4" height="8" fill="#2c2c2c" />
<rect x="777" y="448" width="4" height="4" fill="#565656" />
<rect x="737" y="410" width="8" height="4" fill="#2c2c2c" />
<rect x="739" y="408" width="4" height="8" fill="#2c2c2c" />
<rect x="739" y="410" width="4" height="4" fill="#565656" />
<rect x="737" y="420" width="8" height="4" fill="#2c2c2c" />
<rect x="739" y="418" width="4" height="8" fill="#2c2c2c" />
<rect x="739" y="420" width="4" height="4" fill="#565656" />
<rect x="737" y="430" width="8" height="4" fill="#2c2c2c" />
<rect x="739" y="428" width="4" height="8" fill="#2c2c2c" />
<rect x="739" y="430" width="4" height="4" fill="#565656" />
<rect x="793" y="410" width="8" height="4" fill="#2c2c2c" />
<rect x="795" y="408" width="4" height="8" fill="#2c2c2c" />
<rect x="795" y="410" width="4" height="4" fill="#565656" />
<rect x="793" y="420" width="8" height="4" fill="#2c2c2c" />
<rect x="795" y="418" width="4" height="8" fill="#2c2c2c" />
<rect x="795" y="420" width="4" height="4" fill="#565656" />
<rect x="793" y="430" width="8" height="4" fill="#2c2c2c" />
<rect x="795" y="428" width="4" height="8" fill="#2c2c2c" />
<rect x="795" y="430" width="4" height="4" fill="#565656" />
<rect x="755" y="536" width="8" height="4" fill="#2c2c2c" />
<rect x="757" y="534" width="4" height="8" fill="#2c2c2c" />
<rect x="757" y="536" width="4" height="4" fill="#565656" />
<rect x="765" y="536" width="8" height="4" fill="#2c2c2c" />
<rect x="767" y="534" width="4" height="8" fill="#2c2c2c" />
<rect x="767" y="536" width="4" height="4" fill="#565656" />
<rect x="775" y="536" width="8" height="4" fill="#2c2c2c" />
<rect x="777" y="534" width="4" height="8" fill="#2c2c2c" />
<rect x="777" y="536" width="4" height="4" fill="#565656" />
<rect x="755" y="592" width="8" height="4" fill="#2c2c2c" />
<rect x="757" y="590" width="4" height="8" fill="#2c2c2c" />
<rect x="757" y="592" width="4" height="4" fill="#565656" />
<rect x="765" y="592" width="8" height="4" fill="#2c2c2c" />
<rect x="767" y="590" width="4" height="8" fill="#2c2c2c" />
<rect x="767" y="592" width="4" height="4" fill="#565656" />
<rect x="775" y="592" width="8" height="4" fill="#2c2c2c" />
<rect x="777" y="590" width="4" height="8" fill="#2c2c2c" />
<rect x="777" y="592" width="4" height="4" fill="#565656" />
<rect x="737" y="554" width="8" height="4" fill="#2c2c2c" />
<rect x="739" y="552" width="4" height="8" fill="#2c2c2c" />
<rect x="739" y="554" width="4" height="4" fill="#565656" />
<rect x="737" y="564" width="8" height="4" fill="#2c2c2c" />
<rect x="739" y="562" width="4" height="8" fill="#2c2c2c" />
<rect x="739" y="564" width="4" height="4" fill="#565656" />
<rect x="737" y="574" width="8" height="4" fill="#2c2c2c" />
<rect x="739" y="572" width="4" height="8" fill="#2c2c2c" />
<rect x="739" y="574" width="4" height="4" fill="#565656" />
<rect x="793" y="554" width="8" height="4" fill="#2c2c2c" />
<rect x="795" y="552" width="4" height="8" fill="#2c2c2c" />
<rect x="795" y="554" width="4" height="4" fill="#565656" />
<rect x="793" y="564" width="8" height="4" fill="#2c2c2c" />
<rect x="795" y="562" width="4" height="8" fill="#2c2c2c" />
<rect x="795" y="564" width="4" height="4" fill="#565656" />
<rect x="793" y="574" width="8" height="4" fill="#2c2c2c" />
<rect x="795" y="572" width="4" height="8" fill="#2c2c2c" />
<rect x="795" y="574" width="4" height="4" fill="#565656" />
<rect x="827" y="608" width="8" height="4" fill="#2c2c2c" />
<rect x="829" y="606" width="4" height="8" fill="#2c2c2c" />
<rect x="829" y="608" width="4" height="4" fill="#565656" />
<rect x="837" y="608" width="8" height="4" fill="#2c2c2c" />
<rect x="839" y="606" width="4" height="8" fill="#2c2c2c" />
<rect x="839" y="608" width="4" height="4" fill="#565656" />
<rect x="847" y="608" width="8" height="4" fill="#2c2c2c" />
<rect x="849" y="606" width="4" height="8" fill="#2c2c2c" />
<rect x="849" y="608" width="4" height="4" fill="#565656" />
<rect x="827" y="664" width="8" height="4" fill="#2c2c2c" />
<rect x="829" y="662" width="4" height="8" fill="#2c2c2c" />
<rect x="829" y="664" width="4" height="4" fill="#565656" />
<rect x="837" y="664" width="8" height="4" fill="#2c2c2c" />
<rect x="839" y="662" width="4" height="8" fill="#2c2c2c" />
<rect x="839" y="664" width="4" height="4" fill="#565656" />
<rect x="847" y="664" width="8" height="4" fill="#2c2c2c" />
<rect x="849" y="662" width="4" height="8" fill="#2c2c2c" />
<rect x="849" y="664" width="4" height="4" fill="#565656" />
<rect x="809" y="626" width="8" height="4" fill="#2c2c2c" />
<rect x="811" y="624" width="4" height="8" fill="#2c2c2c" />
<rect x="811" y="626" width="4" height="4" fill="#565656" />
<rect x="809" y="636" width="8" height="4" fill="#2c2c2c" />
<rect x="811" y="634" width="4" height="8" fill="#2c2c2c" />
<rect x="811" y="636" width="4" height="4" fill="#565656" />
<rect x="809" y="646" width="8" height="4" fill="#2c2c2c" />
<rect x="811" y="644" width="4" height="8" fill="#2c2c2c" />
<rect x="811" y="646" width="4" height="4" fill="#565656" />
<rect x="865" y="626" width="8" height="4" fill="#2c2c2c" />
<rect x="867" y="624" width="4" height="8" fill="#2c2c2c" />
<rect x="867" y="626" width="4" height="4" fill="#565656" />
<rect x="865" y="636" width="8" height="4" fill="#2c2c2c" />
<rect x="867" y="634" width="4" height="8" fill="#2c2c2c" />
<rect x="867" y="636" width="4" height="4" fill="#565656" />
<rect x="865" y="646" width="8" height="4" fill="#2c2c2c" />
<rect x="867" y="644" width="4" height="8" fill="#2c2c2c" />
<rect x="867" y="646" width="4" height="4" fill="#565656" />
<rect x="899" y="680" width="8" height="4" fill="#2c2c2c" />
<rect x="901" y="678" width="4" height="8" fill="#2c2c2c" />
<rect x="901" y="680" width="4" height="4" fill="#565656" />
<rect x="909" y="680" width="8" height="4" fill="#2c2c2c" />
<rect x="911" y="678" width="4" height="8" fill="#2c2c2c" />
<rect x="911" y="680" width="4" height="4" fill="#565656" />
<rect x="919" y="680" width="8" height="4" fill="#2c2c2c" />
<rect x="921" y="678" width="4" height="8" fill="#2c2c2c" />
<rect x="921" y="680" width="4" height="4" fill="#565656" />
<rect x="899" y="736" width="8" height="4" fill="#2c2c2c" />
<rect x="901" y="734" width="4" height="8" fill="#2c2c2c" />
<rect x="901" y="736" width="4" height="4" fill="#565656" />
<rect x="909" y="736" width="8" height="4" fill="#2c2c2c" />
<rect x="911" y="734" width="4" height="8" fill="#2c2c2c" />
<rect x="911" y="736" width="4" height="4" fill="#565656" />
<rect x="919" y="736" width="8" height="4" fill="#2c2c2c" />
<rect x="921" y="734" width="4" height="8" fill="#2c2c2c" />
<rect x="921" y="736" width="4" height="4" fill="#565656" />
<rect x="881" y="698" width="8" height="4" fill="#2c2c2c" />
<rect x="883" y="696" width="4" height="8" fill="#2c2c2c" />
<rect x="883" y="698" width="4" height="4" fill="#565656" />
<rect x="881" y="708" width="8" height="4" fill="#2c2c2c" />
<rect x="883" y="706" width="4" height="8" fill="#2c2c2c" />
<rect x="883" y="708" width="4" height="4" fill="#565656" />
<rect x="881" y="718" width="8" height="4" fill="#2c2c2c" />
<rect x="883" y="716" width="4" height="8" fill="#2c2c2c" />
<rect x="883" y="718" width="4" height="4" fill="#565656" />
<rect x="937" y="698" width="8" height="4" fill="#2c2c2c" />
<rect x="939" y="696" width="4" height="8" fill="#2c2c2c" />
<rect x="939" y="698" width="4" height="4" fill="#565656" />
<rect x="937" y="708" width="8" height="4" fill="#2c2c2c" />
<rect x="939" y="706" width="4" height="8" fill="#2c2c2c" />
<rect x="939" y="708" width="4" height="4" fill="#565656" />
<rect x="937" y="718" width="8" height="4" fill="#2c2c2c" />
<rect x="939" y="716" width="4" height="8" fill="#2c2c2c" />
<rect x="939" y="718" width="4" height="4" fill="#565656" />
<rect x="611" y="536" width="8" height="4" fill="#2c2c2c" />
<rect x="613" y="534" width="4" height="8" fill="#2c2c2c" />
<rect x="613" y="536" width="4" height="4" fill="#565656" />
<rect x="621" y="536" width="8" height="4" fill="#2c2c2c" />
<rect x="623" y="534" width="4" height="8" fill="#2c2c2c" />
<rect x="623" y="536" width="4" height="4" fill="#565656" />
<rect x="631" y="536" width="8" height="4" fill="#2c2c2c" />
<rect x="633" y="534" width="4" height="8" fill="#2c2c2c" />
<rect x="633" y="536" width="4" height="4" fill="#565656" />
<rect x="611" y="592" width="8" height="4" fill="#2c2c2c" />
<rect x="613" y="590" width="4" height="8" fill="#2c2c2c" />
<rect x="613" y="592" width="4" height="4" fill="#565656" />
<rect x="621" y="592" width="8" height="4" fill="#2c2c2c" />
<rect x="623" y="590" width="4" height="8" fill="#2c2c2c" />
<rect x="623" y="592" width="4" height="4" fill="#565656" />
<rect x="631" y="592" width="8" height="4" fill="#2c2c2c" />
<rect x="633" y="590" width="4" height="8" fill="#2c2c2c" />
<rect x="633" y="592" width="4" height="4" fill="#565656" />
<rect x="593" y="554" width="8" height="4" fill="#2c2c2c" />
<rect x="595" y="552" width="4" height="8" fill="#2c2c2c" />
<rect x="595" y="554" width="4" height="4" fill="#565656" />
<rect x="593" y="564" width="8" height="4" fill="#2c2c2c" />
<rect x="595" y="562" width="4" height="8" fill="#2c2c2c" />
<rect x="595" y="564" width="4" height="4" fill="#565656" />
<rect x="593" y="574" width="8" height="4" fill="#2c2c2c" />
<rect x="595" y="572" width="4" height="8" fill="#2c2c2c" />
<rect x="595" y="574" width="4" height="4" fill="#565656" />
<rect x="649" y="554" width="8" height="4" fill="#2c2c2c" />
<rect x="651" y="552" width="4" height="8" fill="#2c2c2c" />
<rect x="651" y="554" width="4" height="4" fill="#565656" />
<rect x="649" y="564" width="8" height="4" fill="#2c2c2c" />
<rect x="651" y="562" width="4" height="8" fill="#2c2c2c" />
<rect x="651" y="564" width="4" height="4" fill="#565656" />
<rect x="649" y="574" width="8" height="4" fill="#2c2c2c" />
<rect x="651" y="572" width="4" height="8" fill="#2c2c2c" />
<rect x="651" y="574" width="4" height="4" fill="#565656" />
<rect x="539" y="608" width="8" height="4" fill="#2c2c2c" />
<rect x="541" y="606" width="4" height="8" fill="#2c2c2c" />
<rect x="541" y="608" width="4" height="4" fill="#565656" />
<rect x="549" y="608" width="8" height="4" fill="#2c2c2c" />
<rect x="551" y="606" width="4" height="8" fill="#2c2c2c" />
<rect x="551" y="608" width="4" height="4" fill="#565656" />
<rect x="559" y="608" width="8" height="4" fill="#2c2c2c" />
<rect x="561" y="606" width="4" height="8" fill="#2c2c2c" />
<rect x="561" y="608" width="4" height="4" fill="#565656" />
<rect x="539" y="664" width="8" height="4" fill="#2c2c2c" />
<rect x="541" y="662" width="4" height="8" fill="#2c2c2c" />
<rect x="541" y="664" width="4" height="4" fill="#565656" />
<rect x="549" y="664" width="8" height="4" fill="#2c2c2c" />
<rect x="551" y="662" width="4" height="8" fill="#2c2c2c" />
<rect x="551" y="664" width="4" height="4" fill="#565656" />
<rect x="559" y="664" width="8" height="4" fill="#2c2c2c" />
<rect x="561" y="662" width="4" height="8" fill="#2c2c2c" />
<rect x="561" y="664" width="4" height="4" fill="#565656" />
<rect x="521" y="626" width="8" height="4" fill="#2c2c2c" />
<rect x="523" y="624" width="4" height="8" fill="#2c2c2c" />
<rect x="523" y="626" width="4" height="4" fill="#565656" />
<rect x="521" y="636" width="8" height="4" fill="#2c2c2c" />
<rect x="523" y="634" width="4" height="8" fill="#2c2c2c" />
<rect x="523" y="636" width="4" height="4" fill="#565656" />
<rect x="521" y="646" width="8" height="4" fill="#2c2c2c" />
<rect x="523" y="644" width="4" height="8" fill="#2c2c2c" />
<rect x="523" y="646" width="4" height="4" fill="#565656" />
<rect x="577" y="626" width="8" height="4" fill="#2c2c2c" />
<rect x="579" y="624" width="4" height="8" fill="#2c2c2c" />
<rect x="579" y="626" width="4" height="4" fill="#565656" />
<rect x="577" y="636" width="8" height="4" fill="#2c2c2c" />
<rect x="579" y="634" width="4" height="8" fill="#2c2c2c" />
<rect x="579" y="636" width="4" height="4" fill="#565656" />
<rect x="577" y="646" width="8" height="4" fill="#2c2c2c" />
<rect x="579" y="644" width="4" height="8" fill="#2c2c2c" />
<rect x="579" y="646" width="4" height="4" fill="#565656" />
<rect x="467" y="680" width="8" height="4" fill="#2c2c2c" />
<rect x="469" y="678" width="4" height="8" fill="#2c2c2c" />
<rect x="469" y="680" width="4" height="4" fill="#565656" />
<rect x="477" y="680" width="8" height="4" fill="#2c2c2c" />
<rect x="479" y="678" width="4" height="8" fill="#2c2c2c" />
<rect x="479" y="680" width="4" height="4" fill="#565656" />
<rect x="487" y="680" width="8" height="4" fill="#2c2c2c" />
<rect x="489" y="678" width="4" height="8" fill="#2c2c2c" />
<rect x="489" y="680" width="4" height="4" fill="#565656" />
<rect x="467" y="736" width="8" height="4" fill="#2c2c2c" />
<rect x="469" y="734" width="4" height="8" fill="#2c2c2c" />
<rect x="469" y="736" width="4" height="4" fill="#565656" />
<rect x="477" y="736" width="8" height="4" fill="#2c2c2c" />
<rect x="479" y="734" width="4" height="8" fill="#2c2c2c" />
<rect x="479" y="736" width="4" height="4" fill="#565656" />
<rect x="487" y="736" width="8" height="4" fill="#2c2c2c" />
<rect x="489" y="734" width="4" height="8" fill="#2c2c2c" />
<rect x="489" y="736" width="4" height="4" fill="#565656" />
<rect x="449" y="698" width="8" height="4" fill="#2c2c2c" />
<rect x="451" y="696" width="4" height="8" fill="#2c2c2c" />
<rect x="451" y="698" width="4" height="4" fill="#565656" />
<rect x="449" y="708" width="8" height="4" fill="#2c2c2c" />
<rect x="451" y="706" width="4" height="8" fill="#2c2c2c" />
<rect x="451" y="708" width="4" height="4" fill="#565656" />
<rect x="449" y="718" width="8" height="4" fill="#2c2c2c" />
<rect x="451" y="716" width="4" height="8" fill="#2c2c2c" />
<rect x="451" y="718" width="4" height="4" fill="#565656" />
<rect x="505" y="698" width="8" height="4" fill="#2c2c2c" />
<rect x="507" y="696" width="4" height="8" fill="#2c2c2c" />
<rect x="507" y="698" width="4" height="4" fill="#565656" />
<rect x="505" y="708" width="8" height="4" fill="#2c2c2c" />
<rect x="507" y="706" width="4" height="8" fill="#2c2c2c" />
<rect x="507" y="708" width="4" height="4" fill="#565656" />
<rect x="505" y="718" width="8" height="4" fill="#2c2c2c" />
<rect x="507" y="716" width="4" height="8" fill="#2c2c2c" />
<rect x="507" y="718" width="4" height="4" fill="#565656" />
<rect x="1187" y="608" width="8" height="4" fill="#2c2c2c" />
<rect x="1189" y="606" width="4" height="8" fill="#2c2c2c" />
<rect x="1189" y="608" width="4" height="4" fill="#565656" />
<rect x="1197" y="608" width="8" height="4" fill="#2c2c2c" />
<rect x="1199" y="606" width="4" height="8" fill="#2c2c2c" />
<rect x="1199" y="608" width="4" height="4" fill="#565656" />
<rect x="1207" y="608" width="8" height="4" fill="#2c2c2c" />
<rect x="1209" y="606" width="4" height="8" fill="#2c2c2c" />
<rect x="1209" y="608" width="4" height="4" fill="#565656" />
<rect x="1187" y="664" width="8" height="4" fill="#2c2c2c" />
<rect x="1189" y="662" width="4" height="8" fill="#2c2c2c" />
<rect x="1189" y="664" width="4" height="4" fill="#565656" />
<rect x="1197" y="664" width="8" height="4" fill="#2c2c2c" />
<rect x="1199" y="662" width="4" height="8" fill="#2c2c2c" />
<rect x="1199" y="664" width="4" height="4" fill="#565656" />
<rect x="1207" y="664" width="8" height="4" fill="#2c2c2c" />
<rect x="1209" y="662" width="4" height="8" fill="#2c2c2c" />
<rect x="1209" y="664" width="4" height="4" fill="#565656" />
<rect x="1169" y="626" width="8" height="4" fill="#2c2c2c" />
<rect x="1171" y="624" width="4" height="8" fill="#2c2c2c" />
<rect x="1171" y="626" width="4" height="4" fill="#565656" />
<rect x="1169" y="636" width="8" height="4" fill="#2c2c2c" />
<rect x="1171" y="634" width="4" height="8" fill="#2c2c2c" />
<rect x="1171" y="636" width="4" height="4" fill="#565656" />
<rect x="1169" y="646" width="8" height="4" fill="#2c2c2c" />
<rect x="1171" y="644" width="4" height="8" fill="#2c2c2c" />
<rect x="1171" y="646" width="4" height="4" fill="#565656" />
<rect x="1225" y="626" width="8" height="4" fill="#2c2c2c" />
<rect x="1227" y="624" width="4" height="8" fill="#2c2c2c" />
<rect x="1227" y="626" width="4" height="4" fill="#565656" />
<rect x="1225" y="636" width="8" height="4" fill="#2c2c2c" />
<rect x="1227" y="634" width="4" height="8" fill="#2c2c2c" />
<rect x="1227" y="636" width="4" height="4" fill="#565656" />
<rect x="1225" y="646" width="8" height="4" fill="#2c2c2c" />
<rect x="1227" y="644" width="4" height="8" fill="#2c2c2c" />
<rect x="1227" y="646" width="4" height="4" fill="#565656" />
<rect x="1115" y="680" width="8" height="4" fill="#2c2c2c" />
<rect x="1117" y="678" width="4" height="8" fill="#2c2c2c" />
<rect x="1117" y="680" width="4" height="4" fill="#565656" />
<rect x="1125" y="680" width="8" height="4" fill="#2c2c2c" />
<rect x="1127" y="678" width="4" height="8" fill="#2c2c2c" />
<rect x="1127" y="680" width="4" height="4" fill="#565656" />
<rect x="1135" y="680" width="8" height="4" fill="#2c2c2c" />
<rect x="1137" y="678" width="4" height="8" fill="#2c2c2c" />
<rect x="1137" y="680" width="4" height="4" fill="#565656" />
<rect x="1115" y="736" width="8" height="4" fill="#2c2c2c" />
<rect x="1117" y="734" width="4" height="8" fill="#2c2c2c" />
<rect x="1117" y="736" width="4" height="4" fill="#565656" />
<rect x="1125" y="736" width="8" height="4" fill="#2c2c2c" />
<rect x="1127" y="734" width="4" height="8" fill="#2c2c2c" />
<rect x="1127" y="736" width="4" height="4" fill="#565656" />
<rect x="1135" y="736" width="8" height="4" fill="#2c2c2c" />
<rect x="1137" y="734" width="4" height="8" fill="#2c2c2c" />
<rect x="1137" y="736" width="4" height="4" fill="#565656" />
<rect x="1097" y="698" width="8" height="4" fill="#2c2c2c" />
<rect x="1099" y="696" width="4" height="8" fill="#2c2c2c" />
<rect x="1099" y="698" width="4" height="4" fill="#565656" />
<rect x="1097" y="708" width="8" height="4" fill="#2c2c2c" />
<rect x="1099" y="706" width="4" height="8" fill="#2c2c2c" />
<rect x="1099" y="708" width="4" height="4" fill="#565656" />
<rect x="1097" y="718" width="8" height="4" fill="#2c2c2c" />
<rect x="1099" y="716" width="4" height="8" fill="#2c2c2c" />
<rect x="1099" y="718" width="4" height="4" fill="#565656" />
<rect x="1153" y="698" width="8" height="4" fill="#2c2c2c" />
<rect x="1155" y="696" width="4" height="8" fill="#2c2c2c" />
<rect x="1155" y="698" width="4" height="4" fill="#565656" />
<rect x="1153" y="708" width="8" height="4" fill="#2c2c2c" />
<rect x="1155" y="706" width="4" height="8" fill="#2c2c2c" />
<rect x="1155" y="708" width="4" height="4" fill="#565656" />
<rect x="1153" y="718" width="8" height="4" fill="#2c2c2c" />
<rect x="1155" y="716" width="4" height="8" fill="#2c2c2c" />
<rect x="1155" y="718" width="4" height="4" fill="#565656" />
<rect x="1043" y="752" width="8" height="4" fill="#2c2c2c" />
<rect x="1045" y="750" width="4" height="8" fill="#2c2c2c" />
<rect x="1045" y="752" width="4" height="4" fill="#565656" />
<rect x="1053" y="752" width="8" height="4" fill="#2c2c2c" />
<rect x="1055" y="750" width="4" height="8" fill="#2c2c2c" />
<rect x="1055" y="752" width="4" height="4" fill="#565656" />
<rect x="1063" y="752" width="8" height="4" fill="#2c2c2c" />
<rect x="1065" y="750" width="4" height="8" fill="#2c2c2c" />
<rect x="1065" y="752" width="4" height="4" fill="#565656" />
<rect x="1043" y="808" width="8" height="4" fill="#2c2c2c" />
<rect x="1045" y="806" width="4" height="8" fill="#2c2c2c" />
<rect x="1045" y="808" width="4" height="4" fill="#565656" />
<rect x="1053" y="808" width="8" height="4" fill="#2c2c2c" />
<rect x="1055" y="806" width="4" height="8" fill="#2c2c2c" />
<rect x="1055" y="808" width="4" height="4" fill="#565656" />
<rect x="1063" y="808" width="8" height="4" fill="#2c2c2c" />
<rect x="1065" y="806" width="4" height="8" fill="#2c2c2c" />
<rect x="1065" y="808" width="4" height="4" fill="#565656" />
<rect x="1025" y="770" width="8" height="4" fill="#2c2c2c" />
<rect x="1027" y="768" width="4" height="8" fill="#2c2c2c" />
<rect x="1027" y="770" width="4" height="4" fill="#565656" />
<rect x="1025" y="780" width="8" height="4" fill="#2c2c2c" />
<rect x="1027" y="778" width="4" height="8" fill="#2c2c2c" />
<rect x="1027" y="780" width="4" height="4" fill="#565656" />
<rect x="1025" y="790" width="8" height="4" fill="#2c2c2c" />
<rect x="1027" y="788" width="4" height="8" fill="#2c2c2c" />
<rect x="1027" y="790" width="4" height="4" fill="#565656" />
<rect x="1081" y="770" width="8" height="4" fill="#2c2c2c" />
<rect x="1083" y="768" width="4" height="8" fill="#2c2c2c" />
<rect x="1083" y="770" width="4" height="4" fill="#565656" />
<rect x="1081" y="780" width="8" height="4" fill="#2c2c2c" />
<rect x="1083" y="778" width="4" height="8" fill="#2c2c2c" />
<rect x="1083" y="780" width="4" height="4" fill="#565656" />
<rect x="1081" y="790" width="8" height="4" fill="#2c2c2c" />
<rect x="1083" y="788" width="4" height="8" fill="#2c2c2c" />
<rect x="1083" y="790" width="4" height="4" fill="#565656" />
<rect x="395" y="1040" width="8" height="4" fill="#2c2c2c" />
<rect x="397" y="1038" width="4" height="8" fill="#2c2c2c" />
<rect x="397" y="1040" width="4" height="4" fill="#565656" />
<rect x="405" y="1040" width="8" height="4" fill="#2c2c2c" />
<rect x="407" y="1038" width="4" height="8" fill="#2c2c2c" />
<rect x="407" y="1040" width="4" height="4" fill="#565656" />
<rect x="415" y="1040" width="8" height="4" fill="#2c2c2c" />
<rect x="417" y="1038" width="4" height="8" fill="#2c2c2c" />
<rect x="417" y="1040" width="4" height="4" fill="#565656" />
<rect x="395" y="1096" width="8" height="4" fill="#2c2c2c" />
<rect x="397" y="1094" width="4" height="8" fill="#2c2c2c" />
<rect x="397" y="1096" width="4" height="4" fill="#565656" />
<rect x="405" y="1096" width="8" height="4" fill="#2c2c2c" />
<rect x="407" y="1094" width="4" height="8" fill="#2c2c2c" />
<rect x="407" y="1096" width="4" height="4" fill="#565656" />
<rect x="415" y="1096" width="8" height="4" fill="#2c2c2c" />
<rect x="417" y="1094" width="4" height="8" fill="#2c2c2c" />
<rect x="417" y="1096" width="4" height="4" fill="#565656" />
<rect x="377" y="1058" width="8" height="4" fill="#2c2c2c" />
<rect x="379" y="1056" width="4" height="8" fill="#2c2c2c" />
<rect x="379" y="1058" width="4" height="4" fill="#565656" />
<rect x="377" y="1068" width="8" height="4" fill="#2c2c2c" />
<rect x="379" y="1066" width="4" height="8" fill="#2c2c2c" />
<rect x="379" y="1068" width="4" height="4" fill="#565656" />
<rect x="377" y="1078" width="8" height="4" fill="#2c2c2c" />
<rect x="379" y="1076" width="4" height="8" fill="#2c2c2c" />
<rect x="379" y="1078" width="4" height="4" fill="#565656" />
<rect x="433" y="1058" width="8" height="4" fill="#2c2c2c" />
<rect x="435" y="1056" width="4" height="8" fill="#2c2c2c" />
<rect x="435" y="1058" width="4" height="4" fill="#565656" />
<rect x="433" y="1068" width="8" height="4" fill="#2c2c2c" />
<rect x="435" y="1066" width="4" height="8" fill="#2c2c2c" />
<rect x="435" y="1068" width="4" height="4" fill="#565656" />
<rect x="433" y="1078" width="8" height="4" fill="#2c2c2c" />
<rect x="435" y="1076" width="4" height="8" fill="#2c2c2c" />
<rect x="435" y="1078" width="4" height="4" fill="#565656" />
<rect x="395" y="752" width="8" height="4" fill="#2c2c2c" />
<rect x="397" y="750" width="4" height="8" fill="#2c2c2c" />
<rect x="397" y="752" width="4" height="4" fill="#565656" />
<rect x="405" y="752" width="8" height="4" fill="#2c2c2c" />
<rect x="407" y="750" width="4" height="8" fill="#2c2c2c" />
<rect x="407" y="752" width="4" height="4" fill="#565656" />
<rect x="415" y="752" width="8" height="4" fill="#2c2c2c" />
<rect x="417" y="750" width="4" height="8" fill="#2c2c2c" />
<rect x="417" y="752" width="4" height="4" fill="#565656" />
<rect x="395" y="808" width="8" height="4" fill="#2c2c2c" />
<rect x="397" y="806" width="4" height="8" fill="#2c2c2c" />
<rect x="397" y="808" width="4" height="4" fill="#565656" />
<rect x="405" y="808" width="8" height="4" fill="#2c2c2c" />
<rect x="407" y="806" width="4" height="8" fill="#2c2c2c" />
<rect x="407" y="808" width="4" height="4" fill="#565656" />
<rect x="415" y="808" width="8" height="4" fill="#2c2c2c" />
<rect x="417" y="806" width="4" height="8" fill="#2c2c2c" />
<rect x="417" y="808" width="4" height="4" fill="#565656" />
<rect x="377" y="770" width="8" height="4" fill="#2c2c2c" />
<rect x="379" y="768" width="4" height="8" fill="#2c2c2c" />
<rect x="379" y="770" width="4" height="4" fill="#565656" />
<rect x="377" y="780" width="8" height="4" fill="#2c2c2c" />
<rect x="379" y="778" width="4" height="8" fill="#2c2c2c" />
<rect x="379" y="780" width="4" height="4" fill="#565656" />
<rect x="377" y="790" width="8" height="4" fill="#2c2c2c" />
<rect x="379" y="788" width="4" height="8" fill="#2c2c2c" />
<rect x="379" y="790" width="4" height="4" fill="#565656" />
<rect x="433" y="770" width="8" height="4" fill="#2c2c2c" />
<rect x="435" y="768" width="4" height="8" fill="#2c2c2c" />
<rect x="435" y="770" width="4" height="4" fill="#565656" />
<rect x="433" y="780" width="8" height="4" fill="#2c2c2c" />
<rect x="435" y="778" width="4" height="8" fill="#2c2c2c" />
<rect x="435" y="780" width="4" height="4" fill="#565656" />
<rect x="433" y="790" width="8" height="4" fill="#2c2c2c" />
<rect x="435" y="788" width="4" height="8" fill="#2c2c2c" />
<rect x="435" y="790" width="4" height="4" fill="#565656" />
<rect x="827" y="752" width="8" height="4" fill="#2c2c2c" />
<rect x="829" y="750" width="4" height="8" fill="#2c2c2c" />
<rect x="829" y="752" width="4" height="4" fill="#565656" />
<rect x="837" y="752" width="8" height="4" fill="#2c2c2c" />
<rect x="839" y="750" width="4" height="8" fill="#2c2c2c" />
<rect x="839" y="752" width="4" height="4" fill="#565656" />
<rect x="847" y="752" width="8" height="4" fill="#2c2c2c" />
<rect x="849" y="750" width="4" height="8" fill="#2c2c2c" />
<rect x="849" y="752" width="4" height="4" fill="#565656" />
<rect x="827" y="808" width="8" height="4" fill="#2c2c2c" />
<rect x="829" y="806" width="4" height="8" fill="#2c2c2c" />
<rect x="829" y="808" width="4" height="4" fill="#565656" />
<rect x="837" y="808" width="8" height="4" fill="#2c2c2c" />
<rect x="839" y="806" width="4" height="8" fill="#2c2c2c" />
<rect x="839" y="808" width="4" height="4" fill="#565656" />
<rect x="847" y="808" width="8" height="4" fill="#2c2c2c" />
<rect x="849" y="806" width="4" height="8" fill="#2c2c2c" />
<rect x="849" y="808" width="4" height="4" fill="#565656" />
<rect x="809" y="770" width="8" height="4" fill="#2c2c2c" />
<rect x="811" y="768" width="4" height="8" fill="#2c2c2c" />
<rect x="811" y="770" width="4" height="4" fill="#565656" />
<rect x="809" y="780" width="8" height="4" fill="#2c2c2c" />
<rect x="811" y="778" width="4" height="8" fill="#2c2c2c" />
<rect x="811" y="780" width="4" height="4" fill="#565656" />
<rect x="809" y="790" width="8" height="4" fill="#2c2c2c" />
<rect x="811" y="788" width="4" height="8" fill="#2c2c2c" />
<rect x="811" y="790" width="4" height="4" fill="#565656" />
<rect x="865" y="770" width="8" height="4" fill="#2c2c2c" />
<rect x="867" y="768" width="4" height="8" fill="#2c2c2c" />
<rect x="867" y="770" width="4" height="4" fill="#565656" />
<rect x="865" y="780" width="8" height="4" fill="#2c2c2c" />
<rect x="867" y="778" width="4" height="8" fill="#2c2c2c" />
<rect x="867" y="780" width="4" height="4" fill="#565656" />
<rect x="865" y="790" width="8" height="4" fill="#2c2c2c" />
<rect x="867" y="788" width="4" height="8" fill="#2c2c2c" />
<rect x="867" y="790" width="4" height="4" fill="#565656" />
<rect x="1043" y="248" width="8" height="4" fill="#2c2c2c" />
<rect x="1045" y="246" width="4" height="8" fill="#2c2c2c" />
<rect x="1045" y="248" width="4" height="4" fill="#565656" />
<rect x="1053" y="248" width="8" height="4" fill="#2c2c2c" />
<rect x="1055" y="246" width="4" height="8" fill="#2c2c2c" />
<rect x="1055" y="248" width="4" height="4" fill="#565656" />
<rect x="1063" y="248" width="8" height="4" fill="#2c2c2c" />
<rect x="1065" y="246" width="4" height="8" fill="#2c2c2c" />
<rect x="1065" y="248" width="4" height="4" fill="#565656" />
<rect x="1043" y="304" width="8" height="4" fill="#2c2c2c" />
<rect x="1045" y="302" width="4" height="8" fill="#2c2c2c" />
<rect x="1045" y="304" width="4" height="4" fill="#565656" />
<rect x="1053" y="304" width="8" height="4" fill="#2c2c2c" />
<rect x="1055" y="302" width="4" height="8" fill="#2c2c2c" />
<rect x="1055" y="304" width="4" height="4" fill="#565656" />
<rect x="1063" y="304" width="8" height="4" fill="#2c2c2c" />
<rect x="1065" y="302" width="4" height="8" fill="#2c2c2c" />
<rect x="1065" y="304" width="4" height="4" fill="#565656" />
<rect x="1025" y="266" width="8" height="4" fill="#2c2c2c" />
<rect x="1027" y="264" width="4" height="8" fill="#2c2c2c" />
<rect x="1027" y="266" width="4" height="4" fill="#565656" />
<rect x="1025" y="276" width="8" height="4" fill="#2c2c2c" />
<rect x="1027" y="274" width="4" height="8" fill="#2c2c2c" />
<rect x="1027" y="276" width="4" height="4" fill="#565656" />
<rect x="1025" y="286" width="8" height="4" fill="#2c2c2c" />
<rect x="1027" y="284" width="4" height="8" fill="#2c2c2c" />
<rect x="1027" y="286" width="4" height="4" fill="#565656" />
<rect x="1081" y="266" width="8" height="4" fill="#2c2c2c" />
<rect x="1083" y="264" width="4" height="8" fill="#2c2c2c" />
<rect x="1083" y="266" width="4" height="4" fill="#565656" />
<rect x="1081" y="276" width="8" height="4" fill="#2c2c2c" />
<rect x="1083" y="274" width="4" height="8" fill="#2c2c2c" />
<rect x="1083" y="276" width="4" height="4" fill="#565656" />
<rect x="1081" y="286" width="8" height="4" fill="#2c2c2c" />
<rect x="1083" y="284" width="4" height="8" fill="#2c2c2c" />
<rect x="1083" y="286" width="4" height="4" fill="#565656" />
<rect x="1115" y="320" width="8" height="4" fill="#2c2c2c" />
<rect x="1117" y="318" width="4" height="8" fill="#2c2c2c" />
<rect x="1117" y="320" width="4" height="4" fill="#565656" />
<rect x="1125" y="320" width="8" height="4" fill="#2c2c2c" />
<rect x="1127" y="318" width="4" height="8" fill="#2c2c2c" />
<rect x="1127" y="320" width="4" height="4" fill="#565656" />
<rect x="1135" y="320" width="8" height="4" fill="#2c2c2c" />
<rect x="1137" y="318" width="4" height="8" fill="#2c2c2c" />
<rect x="1137" y="320" width="4" height="4" fill="#565656" />
<rect x="1115" y="376" width="8" height="4" fill="#2c2c2c" />
<rect x="1117" y="374" width="4" height="8" fill="#2c2c2c" />
<rect x="1117" y="376" width="4" height="4" fill="#565656" />
<rect x="1125" y="376" width="8" height="4" fill="#2c2c2c" />
<rect x="1127" y="374" width="4" height="8" fill="#2c2c2c" />
<rect x="1127" y="376" width="4" height="4" fill="#565656" />
<rect x="1135" y="376" width="8" height="4" fill="#2c2c2c" />
<rect x="1137" y="374" width="4" height="8" fill="#2c2c2c" />
<rect x="1137" y="376" width="4" height="4" fill="#565656" />
<rect x="1097" y="338" width="8" height="4" fill="#2c2c2c" />
<rect x="1099" y="336" width="4" height="8" fill="#2c2c2c" />
<rect x="1099" y="338" width="4" height="4" fill="#565656" />
<rect x="1097" y="348" width="8" height="4" fill="#2c2c2c" />
<rect x="1099" y="346" width="4" height="8" fill="#2c2c2c" />
<rect x="1099" y="348" width="4" height="4" fill="#565656" />
<rect x="1097" y="358" width="8" height="4" fill="#2c2c2c" />
<rect x="1099" y="356" width="4" height="8" fill="#2c2c2c" />
<rect x="1099" y="358" width="4" height="4" fill="#565656" />
<rect x="1153" y="338" width="8" height="4" fill="#2c2c2c" />
<rect x="1155" y="336" width="4" height="8" fill="#2c2c2c" />
<rect x="1155" y="338" width="4" height="4" fill="#565656" />
<rect x="1153" y="348" width="8" height="4" fill="#2c2c2c" />
<rect x="1155" y="346" width="4" height="8" fill="#2c2c2c" />
<rect x="1155" y="348" width="4" height="4" fill="#565656" />
<rect x="1153" y="358" width="8" height="4" fill="#2c2c2c" />
<rect x="1155" y="356" width="4" height="8" fill="#2c2c2c" />
<rect x="1155" y="358" width="4" height="4" fill="#565656" />
<rect x="1187" y="392" width="8" height="4" fill="#2c2c2c" />
<rect x="1189" y="390" width="4" height="8" fill="#2c2c2c" />
<rect x="1189" y="392" width="4" height="4" fill="#565656" />
<rect x="1197" y="392" width="8" height="4" fill="#2c2c2c" />
<rect x="1199" y="390" width="4" height="8" fill="#2c2c2c" />
<rect x="1199" y="392" width="4" height="4" fill="#565656" />
<rect x="1207" y="392" width="8" height="4" fill="#2c2c2c" />
<rect x="1209" y="390" width="4" height="8" fill="#2c2c2c" />
<rect x="1209" y="392" width="4" height="4" fill="#565656" />
<rect x="1187" y="448" width="8" height="4" fill="#2c2c2c" />
<rect x="1189" y="446" width="4" height="8" fill="#2c2c2c" />
<rect x="1189" y="448" width="4" height="4" fill="#565656" />
<rect x="1197" y="448" width="8" height="4" fill="#2c2c2c" />
<rect x="1199" y="446" width="4" height="8" fill="#2c2c2c" />
<rect x="1199" y="448" width="4" height="4" fill="#565656" />
<rect x="1207" y="448" width="8" height="4" fill="#2c2c2c" />
<rect x="1209" y="446" width="4" height="8" fill="#2c2c2c" />
<rect x="1209" y="448" width="4" height="4" fill="#565656" />
<rect x="1169" y="410" width="8" height="4" fill="#2c2c2c" />
<rect x="1171" y="408" width="4" height="8" fill="#2c2c2c" />
<rect x="1171" y="410" width="4" height="4" fill="#565656" />
<rect x="1169" y="420" width="8" height="4" fill="#2c2c2c" />
<rect x="1171" y="418" width="4" height="8" fill="#2c2c2c" />
<rect x="1171" y="420" width="4" height="4" fill="#565656" />
<rect x="1169" y="430" width="8" height="4" fill="#2c2c2c" />
<rect x="1171" y="428" width="4" height="8" fill="#2c2c2c" />
<rect x="1171" y="430" width="4" height="4" fill="#565656" />
<rect x="1225" y="410" width="8" height="4" fill="#2c2c2c" />
<rect x="1227" y="408" width="4" height="8" fill="#2c2c2c" />
<rect x="1227" y="410" width="4" height="4" fill="#565656" />
<rect x="1225" y="420" width="8" height="4" fill="#2c2c2c" />
<rect x="1227" y="418" width="4" height="8" fill="#2c2c2c" />
<rect x="1227" y="420" width="4" height="4" fill="#565656" />
<rect x="1225" y="430" width="8" height="4" fill="#2c2c2c" />
<rect x="1227" y="428" width="4" height="8" fill="#2c2c2c" />
<rect x="1227" y="430" width="4" height="4" fill="#565656" />
<rect x="1403" y="392" width="8" height="4" fill="#2c2c2c" />
<rect x="1405" y="390" width="4" height="8" fill="#2c2c2c" />
<rect x="1405" y="392" width="4" height="4" fill="#565656" />
<rect x="1413" y="392" width="8" height="4" fill="#2c2c2c" />
<rect x="1415" y="390" width="4" height="8" fill="#2c2c2c" />
<rect x="1415" y="392" width="4" height="4" fill="#565656" />
<rect x="1423" y="392" width="8" height="4" fill="#2c2c2c" />
<rect x="1425" y="390" width="4" height="8" fill="#2c2c2c" />
<rect x="1425" y="392" width="4" height="4" fill="#565656" />
<rect x="1403" y="448" width="8" height="4" fill="#2c2c2c" />
<rect x="1405" y="446" width="4" height="8" fill="#2c2c2c" />
<rect x="1405" y="448" width="4" height="4" fill="#565656" />
<rect x="1413" y="448" width="8" height="4" fill="#2c2c2c" />
<rect x="1415" y="446" width="4" height="8" fill="#2c2c2c" />
<rect x="1415" y="448" width="4" height="4" fill="#565656" />
<rect x="1423" y="448" width="8" height="4" fill="#2c2c2c" />
<rect x="1425" y="446" width="4" height="8" fill="#2c2c2c" />
<rect x="1425" y="448" width="4" height="4" fill="#565656" />
<rect x="1385" y="410" width="8" height="4" fill="#2c2c2c" />
<rect x="1387" y="408" width="4" height="8" fill="#2c2c2c" />
<rect x="1387" y="410" width="4" height="4" fill="#565656" />
<rect x="1385" y="420" width="8" height="4" fill="#2c2c2c" />
<rect x="1387" y="418" width="4" height="8" fill="#2c2c2c" />
<rect x="1387" y="420" width="4" height="4" fill="#565656" />
<rect x="1385" y="430" width="8" height="4" fill="#2c2c2c" />
<rect x="1387" y="428" width="4" height="8" fill="#2c2c2c" />
<rect x="1387" y="430" width="4" height="4" fill="#565656" />
<rect x="1441" y="410" width="8" height="4" fill="#2c2c2c" />
<rect x="1443" y="408" width="4" height="8" fill="#2c2c2c" />
<rect x="1443" y="410" width="4" height="4" fill="#565656" />
<rect x="1441" y="420" width="8" height="4" fill="#2c2c2c" />
<rect x="1443" y="418" width="4" height="8" fill="#2c2c2c" />
<rect x="1443" y="420" width="4" height="4" fill="#565656" />
<rect x="1441" y="430" width="8" height="4" fill="#2c2c2c" />
<rect x="1443" y="428" width="4" height="8" fill="#2c2c2c" />
<rect x="1443" y="430" width="4" height="4" fill="#565656" />
<rect x="1475" y="680" width="8" height="4" fill="#2c2c2c" />
<rect x="1477" y="678" width="4" height="8" fill="#2c2c2c" />
<rect x="1477" y="680" width="4" height="4" fill="#565656" />
<rect x="1485" y="680" width="8" height="4" fill="#2c2c2c" />
<rect x="1487" y="678" width="4" height="8" fill="#2c2c2c" />
<rect x="1487" y="680" width="4" height="4" fill="#565656" />
<rect x="1495" y="680" width="8" height="4" fill="#2c2c2c" />
<rect x="1497" y="678" width="4" height="8" fill="#2c2c2c" />
<rect x="1497" y="680" width="4" height="4" fill="#565656" />
<rect x="1475" y="736" width="8" height="4" fill="#2c2c2c" />
<rect x="1477" y="734" width="4" height="8" fill="#2c2c2c" />
<rect x="1477" y="736" width="4" height="4" fill="#565656" />
<rect x="1485" y="736" width="8" height="4" fill="#2c2c2c" />
<rect x="1487" y="734" width="4" height="8" fill="#2c2c2c" />
<rect x="1487" y="736" width="4" height="4" fill="#565656" />
<rect x="1495" y="736" width="8" height="4" fill="#2c2c2c" />
<rect x="1497" y="734" width="4" height="8" fill="#2c2c2c" />
<rect x="1497" y="736" width="4" height="4" fill="#565656" />
<rect x="1457" y="698" width="8" height="4" fill="#2c2c2c" />
<rect x="1459" y="696" width="4" height="8" fill="#2c2c2c" />
<rect x="1459" y="698" width="4" height="4" fill="#565656" />
<rect x="1457" y="708" width="8" height="4" fill="#2c2c2c" />
<rect x="1459" y="706" width="4" height="8" fill="#2c2c2c" />
<rect x="1459" y="708" width="4" height="4" fill="#565656" />
<rect x="1457" y="718" width="8" height="4" fill="#2c2c2c" />
<rect x="1459" y="716" width="4" height="8" fill="#2c2c2c" />
<rect x="1459" y="718" width="4" height="4" fill="#565656" />
<rect x="1513" y="698" width="8" height="4" fill="#2c2c2c" />
<rect x="1515" y="696" width="4" height="8" fill="#2c2c2c" />
<rect x="1515" y="698" width="4" height="4" fill="#565656" />
<rect x="1513" y="708" width="8" height="4" fill="#2c2c2c" />
<rect x="1515" y="706" width="4" height="8" fill="#2c2c2c" />
<rect x="1515" y="708" width="4" height="4" fill="#565656" />
<rect x="1513" y="718" width="8" height="4" fill="#2c2c2c" />
<rect x="1515" y="716" width="4" height="8" fill="#2c2c2c" />
<rect x="1515" y="718" width="4" height="4" fill="#565656" />
<rect x="1547" y="752" width="8" height="4" fill="#2c2c2c" />
<rect x="1549" y="750" width="4" height="8" fill="#2c2c2c" />
<rect x="1549" y="752" width="4" height="4" fill="#565656" />
<rect x="1557" y="752" width="8" height="4" fill="#2c2c2c" />
<rect x="1559" y="750" width="4" height="8" fill="#2c2c2c" />
<rect x="1559" y="752" width="4" height="4" fill="#565656" />
<rect x="1567" y="752" width="8" height="4" fill="#2c2c2c" />
<rect x="1569" y="750" width="4" height="8" fill="#2c2c2c" />
<rect x="1569" y="752" width="4" height="4" fill="#565656" />
<rect x="1547" y="808" width="8" height="4" fill="#2c2c2c" />
<rect x="1549" y="806" width="4" height="8" fill="#2c2c2c" />
<rect x="1549" y="808" width="4" height="4" fill="#565656" />
<rect x="1557" y="808" width="8" height="4" fill="#2c2c2c" />
<rect x="1559" y="806" width="4" height="8" fill="#2c2c2c" />
<rect x="1559" y="808" width="4" height="4" fill="#565656" />
<rect x="1567" y="808" width="8" height="4" fill="#2c2c2c" />
<rect x="1569" y="806" width="4" height="8" fill="#2c2c2c" />
<rect x="1569" y="808" width="4" height="4" fill="#565656" />
<rect x="1529" y="770" width="8" height="4" fill="#2c2c2c" />
<rect x="1531" y="768" width="4" height="8" fill="#2c2c2c" />
<rect x="1531" y="770" width="4" height="4" fill="#565656" />
<rect x="1529" y="780" width="8" height="4" fill="#2c2c2c" />
<rect x="1531" y="778" width="4" height="8" fill="#2c2c2c" />
<rect x="1531" y="780" width="4" height="4" fill="#565656" />
<rect x="1529" y="790" width="8" height="4" fill="#2c2c2c" />
<rect x="1531" y="788" width="4" height="8" fill="#2c2c2c" />
<rect x="1531" y="790" width="4" height="4" fill="#565656" />
<rect x="1585" y="770" width="8" height="4" fill="#2c2c2c" />
<rect x="1587" y="768" width="4" height="8" fill="#2c2c2c" />
<rect x="1587" y="770" width="4" height="4" fill="#565656" />
<rect x="1585" y="780" width="8" height="4" fill="#2c2c2c" />
<rect x="1587" y="778" width="4" height="8" fill="#2c2c2c" />
<rect x="1587" y="780" width="4" height="4" fill="#565656" />
<rect x="1585" y="790" width="8" height="4" fill="#2c2c2c" />
<rect x="1587" y="788" width="4" height="8" fill="#2c2c2c" />
<rect x="1587" y="790" width="4" height="4" fill="#565656" />
<rect x="1547" y="248" width="8" height="4" fill="#2c2c2c" />
<rect x="1549" y="246" width="4" height="8" fill="#2c2c2c" />
<rect x="1549" y="248" width="4" height="4" fill="#565656" />
<rect x="1557" y="248" width="8" height="4" fill="#2c2c2c" />
<rect x="1559" y="246" width="4" height="8" fill="#2c2c2c" />
<rect x="1559" y="248" width="4" height="4" fill="#565656" />
<rect x="1567" y="248" width="8" height="4" fill="#2c2c2c" />
<rect x="1569" y="246" width="4" height="8" fill="#2c2c2c" />
<rect x="1569" y="248" width="4" height="4" fill="#565656" />
<rect x="1547" y="304" width="8" height="4" fill="#2c2c2c" />
<rect x="1549" y="302" width="4" height="8" fill="#2c2c2c" />
<rect x="1549" y="304" width="4" height="4" fill="#565656" />
<rect x="1557" y="304" width="8" height="4" fill="#2c2c2c" />
<rect x="1559" y="302" width="4" height="8" fill="#2c2c2c" />
<rect x="1559" y="304" width="4" height="4" fill="#565656" />
<rect x="1567" y="304" width="8" height="4" fill="#2c2c2c" />
<rect x="1569" y="302" width="4" height="8" fill="#2c2c2c" />
<rect x="1569" y="304" width="4" height="4" fill="#565656" />
<rect x="1529" y="266" width="8" height="4" fill="#2c2c2c" />
<rect x="1531" y="264" width="4" height="8" fill="#2c2c2c" />
<rect x="1531" y="266" width="4" height="4" fill="#565656" />
<rect x="1529" y="276" width="8" height="4" fill="#2c2c2c" />
<rect x="1531" y="274" width="4" height="8" fill="#2c2c2c" />
<rect x="1531" y="276" width="4" height="4" fill="#565656" />
<rect x="1529" y="286" width="8" height="4" fill="#2c2c2c" />
<rect x="1531" y="284" width="4" height="8" fill="#2c2c2c" />
<rect x="1531" y="286" width="4" height="4" fill="#565656" />
<rect x="1585" y="266" width="8" height="4" fill="#2c2c2c" />
<rect x="1587" y="264" width="4" height="8" fill="#2c2c2c" />
<rect x="1587" y="266" width="4" height="4" fill="#565656" />
<rect x="1585" y="276" width="8" height="4" fill="#2c2c2c" />
<rect x="1587" y="274" width="4" height="8" fill="#2c2c2c" />
<rect x="1587" y="276" width="4" height="4" fill="#565656" />
<rect x="1585" y="286" width="8" height="4" fill="#2c2c2c" />
<rect x="1587" y="284" width="4" height="8" fill="#2c2c2c" />
<rect x="1587" y="286" width="4" height="4" fill="#565656" />
<rect x="1475" y="320" width="8" height="4" fill="#2c2c2c" />
<rect x="1477" y="318" width="4" height="8" fill="#2c2c2c" />
<rect x="1477" y="320" width="4" height="4" fill="#565656" />
<rect x="1485" y="320" width="8" height="4" fill="#2c2c2c" />
<rect x="1487" y="318" width="4" height="8" fill="#2c2c2c" />
<rect x="1487" y="320" width="4" height="4" fill="#565656" />
<rect x="1495" y="320" width="8" height="4" fill="#2c2c2c" />
<rect x="1497" y="318" width="4" height="8" fill="#2c2c2c" />
<rect x="1497" y="320" width="4" height="4" fill="#565656" />
<rect x="1475" y="376" width="8" height="4" fill="#2c2c2c" />
<rect x="1477" y="374" width="4" height="8" fill="#2c2c2c" />
<rect x="1477" y="376" width="4" height="4" fill="#565656" />
<rect x="1485" y="376" width="8" height="4" fill="#2c2c2c" />
<rect x="1487" y="374" width="4" height="8" fill="#2c2c2c" />
<rect x="1487" y="376" width="4" height="4" fill="#565656" />
<rect x="1495" y="376" width="8" height="4" fill="#2c2c2c" />
<rect x="1497" y="374" width="4" height="8" fill="#2c2c2c" />
<rect x="1497" y="376" width="4" height="4" fill="#565656" />
<rect x="1457" y="338" width="8" height="4" fill="#2c2c2c" />
<rect x="1459" y="336" width="4" height="8" fill="#2c2c2c" />
<rect x="1459" y="338" width="4" height="4" fill="#565656" />
<rect x="1457" y="348" width="8" height="4" fill="#2c2c2c" />
<rect x="1459" y="346" width="4" height="8" fill="#2c2c2c" />
<rect x="1459" y="348" width="4" height="4" fill="#565656" />
<rect x="1457" y="358" width="8" height="4" fill="#2c2c2c" />
<rect x="1459" y="356" width="4" height="8" fill="#2c2c2c" />
<rect x="1459" y="358" width="4" height="4" fill="#565656" />
<rect x="1513" y="338" width="8" height="4" fill="#2c2c2c" />
<rect x="1515" y="336" width="4" height="8" fill="#2c2c2c" />
<rect x="1515" y="338" width="4" height="4" fill="#565656" />
<rect x="1513" y="348" width="8" height="4" fill="#2c2c2c" />
<rect x="1515" y="346" width="4" height="8" fill="#2c2c2c" />
<rect x="1515" y="348" width="4" height="4" fill="#565656" />
<rect x="1513" y="358" width="8" height="4" fill="#2c2c2c" />
<rect x="1515" y="356" width="4" height="8" fill="#2c2c2c" />
<rect x="1515" y="358" width="4" height="4" fill="#565656" />
<rect x="1403" y="608" width="8" height="4" fill="#2c2c2c" />
<rect x="1405" y="606" width="4" height="8" fill="#2c2c2c" />
<rect x="1405" y="608" width="4" height="4" fill="#565656" />
<rect x="1413" y="608" width="8" height="4" fill="#2c2c2c" />
<rect x="1415" y="606" width="4" height="8" fill="#2c2c2c" />
<rect x="1415" y="608" width="4" height="4" fill="#565656" />
<rect x="1423" y="608" width="8" height="4" fill="#2c2c2c" />
<rect x="1425" y="606" width="4" height="8" fill="#2c2c2c" />
<rect x="1425" y="608" width="4" height="4" fill="#565656" />
<rect x="1403" y="664" width="8" height="4" fill="#2c2c2c" />
<rect x="1405" y="662" width="4" height="8" fill="#2c2c2c" />
<rect x="1405" y="664" width="4" height="4" fill="#565656" />
<rect x="1413" y="664" width="8" height="4" fill="#2c2c2c" />
<rect x="1415" y="662" width="4" height="8" fill="#2c2c2c" />
<rect x="1415" y="664" width="4" height="4" fill="#565656" />
<rect x="1423" y="664" width="8" height="4" fill="#2c2c2c" />
<rect x="1425" y="662" width="4" height="8" fill="#2c2c2c" />
<rect x="1425" y="664" width="4" height="4" fill="#565656" />
<rect x="1385" y="626" width="8" height="4" fill="#2c2c2c" />
<rect x="1387" y="624" width="4" height="8" fill="#2c2c2c" />
<rect x="1387" y="626" width="4" height="4" fill="#565656" />
<rect x="1385" y="636" width="8" height="4" fill="#2c2c2c" />
<rect x="1387" y="634" width="4" height="8" fill="#2c2c2c" />
<rect x="1387" y="636" width="4" height="4" fill="#565656" />
<rect x="1385" y="646" width="8" height="4" fill="#2c2c2c" />
<rect x="1387" y="644" width="4" height="8" fill="#2c2c2c" />
<rect x="1387" y="646" width="4" height="4" fill="#565656" />
<rect x="1441" y="626" width="8" height="4" fill="#2c2c2c" />
<rect x="1443" y="624" width="4" height="8" fill="#2c2c2c" />
<rect x="1443" y="626" width="4" height="4" fill="#565656" />
<rect x="1441" y="636" width="8" height="4" fill="#2c2c2c" />
<rect x="1443" y="634" width="4" height="8" fill="#2c2c2c" />
<rect x="1443" y="636" width="4" height="4" fill="#565656" />
<rect x="1441" y="646" width="8" height="4" fill="#2c2c2c" />
<rect x="1443" y="644" width="4" height="8" fill="#2c2c2c" />
<rect x="1443" y="646" width="4" height="4" fill="#565656" />
<rect x="971" y="752" width="8" height="4" fill="#2c2c2c" />
<rect x="973" y="750" width="4" height="8" fill="#2c2c2c" />
<rect x="973" y="752" width="4" height="4" fill="#565656" />
<rect x="981" y="752" width="8" height="4" fill="#2c2c2c" />
<rect x="983" y="750" width="4" height="8" fill="#2c2c2c" />
<rect x="983" y="752" width="4" height="4" fill="#565656" />
<rect x="991" y="752" width="8" height="4" fill="#2c2c2c" />
<rect x="993" y="750" width="4" height="8" fill="#2c2c2c" />
<rect x="993" y="752" width="4" height="4" fill="#565656" />
<rect x="971" y="808" width="8" height="4" fill="#2c2c2c" />
<rect x="973" y="806" width="4" height="8" fill="#2c2c2c" />
<rect x="973" y="808" width="4" height="4" fill="#565656" />
<rect x="981" y="808" width="8" height="4" fill="#2c2c2c" />
<rect x="983" y="806" width="4" height="8" fill="#2c2c2c" />
<rect x="983" y="808" width="4" height="4" fill="#565656" />
<rect x="991" y="808" width="8" height="4" fill="#2c2c2c" />
<rect x="993" y="806" width="4" height="8" fill="#2c2c2c" />
<rect x="993" y="808" width="4" height="4" fill="#565656" />
<rect x="953" y="770" width="8" height="4" fill="#2c2c2c" />
<rect x="955" y="768" width="4" height="8" fill="#2c2c2c" />
<rect x="955" y="770" width="4" height="4" fill="#565656" />
<rect x="953" y="780" width="8" height="4" fill="#2c2c2c" />
<rect x="955" y="778" width="4" height="8" fill="#2c2c2c" />
<rect x="955" y="780" width="4" height="4" fill="#565656" />
<rect x="953" y="790" width="8" height="4" fill="#2c2c2c" />
<rect x="955" y="788" width="4" height="8" fill="#2c2c2c" />
<rect x="955" y="790" width="4" height="4" fill="#565656" />
<rect x="1009" y="770" width="8" height="4" fill="#2c2c2c" />
<rect x="1011" y="768" width="4" height="8" fill="#2c2c2c" />
<rect x="1011" y="770" width="4" height="4" fill="#565656" />
<rect x="1009" y="780" width="8" height="4" fill="#2c2c2c" />
<rect x="1011" y="778" width="4" height="8" fill="#2c2c2c" />
<rect x="1011" y="780" width="4" height="4" fill="#565656" />
<rect x="1009" y="790" width="8" height="4" fill="#2c2c2c" />
<rect x="1011" y="788" width="4" height="8" fill="#2c2c2c" />
<rect x="1011" y="790" width="4" height="4" fill="#565656" />
<rect x="433" y="192" width="530" height="8" rx="1" fill="#19446f"/>
<rect x="435" y="194" width="526" height="4" fill="#12202f" />
<rect x="505" y="264" width="386" height="8" rx="1" fill="#19446f"/>
<rect x="507" y="266" width="382" height="4" fill="#12202f" />
<rect x="577" y="336" width="242" height="8" rx="1" fill="#19446f"/>
<rect x="579" y="338" width="238" height="4" fill="#12202f" />
<rect x="649" y="408" width="98" height="8" rx="1" fill="#19446f"/>
<rect x="651" y="410" width="94" height="4" fill="#12202f" />
<rect x="647" y="552" width="98" height="8" rx="1" fill="#19446f"/>
<rect x="649" y="554" width="94" height="4" fill="#12202f" />
<rect x="575" y="624" width="242" height="8" rx="1" fill="#19446f"/>
<rect x="577" y="626" width="238" height="4" fill="#12202f" />
<rect x="503" y="696" width="386" height="8" rx="1" fill="#19446f"/>
<rect x="505" y="698" width="382" height="4" fill="#12202f" />
<rect x="1081" y="264" width="458" height="8" rx="1" fill="#19446f"/>
<rect x="1083" y="266" width="454" height="4" fill="#12202f" />
<rect x="1153" y="336" width="314" height="8" rx="1" fill="#19446f"/>
<rect x="1155" y="338" width="310" height="4" fill="#12202f" />
<rect x="1225" y="408" width="170" height="8" rx="1" fill="#19446f"/>
<rect x="1227" y="410" width="166" height="4" fill="#12202f" />
<rect x="1223" y="624" width="170" height="8" rx="1" fill="#19446f"/>
<rect x="1225" y="626" width="166" height="4" fill="#12202f" />
<rect x="1151" y="696" width="314" height="8" rx="1" fill="#19446f"/>
<rect x="1153" y="698" width="310" height="4" fill="#12202f" />
<rect x="1079" y="768" width="458" height="8" rx="1" fill="#19446f"/>
<rect x="1081" y="770" width="454" height="4" fill="#12202f" />
<rect x="431" y="768" width="530" height="8" rx="1" fill="#1b5ca0"/>
<rect x="433" y="770" width="526" height="4" fill="#0f2740" />
<rect x="395" y="228" width="8" height="529" rx="1" fill="#19446f"/>
<rect x="397" y="230" width="4" height="525" fill="#12202f" />
<rect x="395" y="804" width="8" height="242" rx="1" fill="#19446f"/>
<rect x="397" y="806" width="4" height="238" fill="#12202f" />
<rect x="467" y="300" width="8" height="386" rx="1" fill="#19446f"/>
<rect x="469" y="302" width="4" height="382" fill="#12202f" />
<rect x="539" y="372" width="8" height="242" rx="1" fill="#19446f"/>
<rect x="541" y="374" width="4" height="238" fill="#12202f" />
<rect x="611" y="444" width="8" height="98" rx="1" fill="#19446f"/>
<rect x="613" y="446" width="4" height="94" fill="#12202f" />
<rect x="755" y="444" width="8" height="100" rx="1" fill="#19446f"/>
<rect x="757" y="446" width="4" height="96" fill="#12202f" />
<rect x="827" y="372" width="8" height="244" rx="1" fill="#19446f"/>
<rect x="829" y="374" width="4" height="240" fill="#12202f" />
<rect x="899" y="300" width="8" height="388" rx="1" fill="#19446f"/>
<rect x="901" y="302" width="4" height="384" fill="#12202f" />
<rect x="971" y="228" width="8" height="532" rx="1" fill="#19446f"/>
<rect x="973" y="230" width="4" height="528" fill="#12202f" />
<rect x="1043" y="300" width="8" height="458" rx="1" fill="#19446f"/>
<rect x="1045" y="302" width="4" height="454" fill="#12202f" />
<rect x="1115" y="372" width="8" height="314" rx="1" fill="#19446f"/>
<rect x="1117" y="374" width="4" height="310" fill="#12202f" />
<rect x="1187" y="444" width="8" height="170" rx="1" fill="#19446f"/>
<rect x="1189" y="446" width="4" height="166" fill="#12202f" />
<rect x="1403" y="444" width="8" height="172" rx="1" fill="#19446f"/>
<rect x="1405" y="446" width="4" height="168" fill="#12202f" />
<rect x="1475" y="372" width="8" height="316" rx="1" fill="#19446f"/>
<rect x="1477" y="374" width="4" height="312" fill="#12202f" />
<rect x="1547" y="300" width="8" height="460" rx="1" fill="#19446f"/>
<rect x="1549" y="302" width="4" height="456" fill="#12202f" />
<rect x="864" y="778" width="97" height="8" rx="1" fill="#3f8a7c"/>
<rect x="866" y="780" width="93" height="4" fill="#2a3a36" />
<rect x="397" y="228" width="4" height="8" fill="#c9c9c9" />
<rect x="395" y="230" width="2" height="10" fill="#c9c9c9" />
<rect x="401" y="230" width="2" height="10" fill="#c9c9c9" />
<rect x="397" y="804" width="4" height="8" fill="#c9c9c9" />
<rect x="395" y="806" width="2" height="10" fill="#c9c9c9" />
<rect x="401" y="806" width="2" height="10" fill="#c9c9c9" />
<rect x="469" y="300" width="4" height="8" fill="#c9c9c9" />
<rect x="467" y="302" width="2" height="10" fill="#c9c9c9" />
<rect x="473" y="302" width="2" height="10" fill="#c9c9c9" />
<rect x="541" y="372" width="4" height="8" fill="#c9c9c9" />
<rect x="539" y="374" width="2" height="10" fill="#c9c9c9" />
<rect x="545" y="374" width="2" height="10" fill="#c9c9c9" />
<rect x="613" y="444" width="4" height="8" fill="#c9c9c9" />
<rect x="611" y="446" width="2" height="10" fill="#c9c9c9" />
<rect x="617" y="446" width="2" height="10" fill="#c9c9c9" />
<rect x="1045" y="300" width="4" height="8" fill="#c9c9c9" />
<rect x="1043" y="302" width="2" height="10" fill="#c9c9c9" />
<rect x="1049" y="302" width="2" height="10" fill="#c9c9c9" />
<rect x="1117" y="372" width="4" height="8" fill="#c9c9c9" />
<rect x="1115" y="374" width="2" height="10" fill="#c9c9c9" />
<rect x="1121" y="374" width="2" height="10" fill="#c9c9c9" />
<rect x="1189" y="444" width="4" height="8" fill="#c9c9c9" />
<rect x="1187" y="446" width="2" height="10" fill="#c9c9c9" />
<rect x="1193" y="446" width="2" height="10" fill="#c9c9c9" />
<rect x="951" y="192" width="10" height="2" fill="#37b2b8" opacity="0.9"/>
<rect x="951" y="198" width="10" height="2" fill="#37b2b8" opacity="0.9"/>
<path d="M955,194 H961 L963,196 L961,198 H955 Z" fill="#37b2b8"/>
<rect x="879" y="264" width="10" height="2" fill="#37b2b8" opacity="0.9"/>
<rect x="879" y="270" width="10" height="2" fill="#37b2b8" opacity="0.9"/>
<path d="M883,266 H889 L891,268 L889,270 H883 Z" fill="#37b2b8"/>
<rect x="807" y="336" width="10" height="2" fill="#37b2b8" opacity="0.9"/>
<rect x="807" y="342" width="10" height="2" fill="#37b2b8" opacity="0.9"/>
<path d="M811,338 H817 L819,340 L817,342 H811 Z" fill="#37b2b8"/>
<rect x="735" y="408" width="10" height="2" fill="#37b2b8" opacity="0.9"/>
<rect x="735" y="414" width="10" height="2" fill="#37b2b8" opacity="0.9"/>
<path d="M739,410 H745 L747,412 L745,414 H739 Z" fill="#37b2b8"/>
<rect x="755" y="532" width="2" height="10" fill="#37b2b8" opacity="0.9"/>
<rect x="761" y="532" width="2" height="10" fill="#37b2b8" opacity="0.9"/>
<path d="M757,536 V542 L759,544 L761,542 V536 Z" fill="#37b2b8"/>
<rect x="827" y="604" width="2" height="10" fill="#37b2b8" opacity="0.9"/>
<rect x="833" y="604" width="2" height="10" fill="#37b2b8" opacity="0.9"/>
<path d="M829,608 V614 L831,616 L833,614 V608 Z" fill="#37b2b8"/>
<rect x="899" y="676" width="2" height="10" fill="#37b2b8" opacity="0.9"/>
<rect x="905" y="676" width="2" height="10" fill="#37b2b8" opacity="0.9"/>
<path d="M901,680 V686 L903,688 L905,686 V680 Z" fill="#37b2b8"/>
<rect x="971" y="748" width="2" height="10" fill="#37b2b8" opacity="0.9"/>
<rect x="977" y="748" width="2" height="10" fill="#37b2b8" opacity="0.9"/>
<path d="M973,752 V758 L975,760 L977,758 V752 Z" fill="#37b2b8"/>
<rect x="1527" y="264" width="10" height="2" fill="#c9a13d" opacity="0.9"/>
<rect x="1527" y="270" width="10" height="2" fill="#c9a13d" opacity="0.9"/>
<path d="M1531,266 H1537 L1539,268 L1537,270 H1531 Z" fill="#c9a13d"/>
<rect x="1455" y="336" width="10" height="2" fill="#c9a13d" opacity="0.9"/>
<rect x="1455" y="342" width="10" height="2" fill="#c9a13d" opacity="0.9"/>
<path d="M1459,338 H1465 L1467,340 L1465,342 H1459 Z" fill="#c9a13d"/>
<rect x="1383" y="408" width="10" height="2" fill="#c9a13d" opacity="0.9"/>
<rect x="1383" y="414" width="10" height="2" fill="#c9a13d" opacity="0.9"/>
<path d="M1387,410 H1393 L1395,412 L1393,414 H1387 Z" fill="#c9a13d"/>
<rect x="1403" y="604" width="2" height="10" fill="#c9a13d" opacity="0.9"/>
<rect x="1409" y="604" width="2" height="10" fill="#c9a13d" opacity="0.9"/>
<path d="M1405,608 V614 L1407,616 L1409,614 V608 Z" fill="#c9a13d"/>
<rect x="1475" y="676" width="2" height="10" fill="#c9a13d" opacity="0.9"/>
<rect x="1481" y="676" width="2" height="10" fill="#c9a13d" opacity="0.9"/>
<path d="M1477,680 V686 L1479,688 L1481,686 V680 Z" fill="#c9a13d"/>
<rect x="1547" y="748" width="2" height="10" fill="#c9a13d" opacity="0.9"/>
<rect x="1553" y="748" width="2" height="10" fill="#c9a13d" opacity="0.9"/>
<path d="M1549,752 V758 L1551,760 L1553,758 V752 Z" fill="#c9a13d"/>
<rect x="647" y="554" width="8" height="4" fill="#37b2b8" />
<rect x="649" y="552" width="10" height="2" fill="#37b2b8" />
<rect x="649" y="558" width="10" height="2" fill="#37b2b8" />
<rect x="575" y="626" width="8" height="4" fill="#37b2b8" />
<rect x="577" y="624" width="10" height="2" fill="#37b2b8" />
<rect x="577" y="630" width="10" height="2" fill="#37b2b8" />
<rect x="503" y="698" width="8" height="4" fill="#37b2b8" />
<rect x="505" y="696" width="10" height="2" fill="#37b2b8" />
<rect x="505" y="702" width="10" height="2" fill="#37b2b8" />
<rect x="864" y="780" width="8" height="4" fill="#37b2b8" />
<rect x="866" y="778" width="10" height="2" fill="#37b2b8" />
<rect x="866" y="784" width="10" height="2" fill="#37b2b8" />
<rect x="1223" y="626" width="8" height="4" fill="#c9a13d" />
<rect x="1225" y="624" width="10" height="2" fill="#c9a13d" />
<rect x="1225" y="630" width="10" height="2" fill="#c9a13d" />
<rect x="1151" y="698" width="8" height="4" fill="#c9a13d" />
<rect x="1153" y="696" width="10" height="2" fill="#c9a13d" />
<rect x="1153" y="702" width="10" height="2" fill="#c9a13d" />
<rect x="1079" y="770" width="8" height="4" fill="#c9a13d" />
<rect x="1081" y="768" width="10" height="2" fill="#c9a13d" />
<rect x="1081" y="774" width="10" height="2" fill="#c9a13d" />
<rect x="775" y="336" width="8" height="2" fill="#45e6ea" />
<rect x="775" y="342" width="8" height="2" fill="#45e6ea" />
<rect x="777" y="338" width="4" height="4" fill="#45e6ea" />
<rect x="677" y="552" width="8" height="2" fill="#d8ece8" />
<rect x="677" y="558" width="8" height="2" fill="#d8ece8" />
<rect x="679" y="554" width="4" height="4" fill="#d8ece8" />
<rect x="543" y="696" width="8" height="2" fill="#e0e0d8" />
<rect x="543" y="702" width="8" height="2" fill="#e0e0d8" />
<rect x="545" y="698" width="4" height="4" fill="#e0e0d8" />
<rect x="1259" y="624" width="8" height="2" fill="#e8e4d4" />
<rect x="1259" y="630" width="8" height="2" fill="#e8e4d4" />
<rect x="1261" y="626" width="4" height="4" fill="#e8e4d4" />
<rect x="395" y="532" width="2" height="8" fill="#6ce8ec" />
<rect x="401" y="532" width="2" height="8" fill="#6ce8ec" />
<rect x="397" y="534" width="4" height="4" fill="#6ce8ec" />
<rect x="1547" y="392" width="2" height="8" fill="#f0c43a" />
<rect x="1553" y="392" width="2" height="8" fill="#f0c43a" />
<rect x="1549" y="394" width="4" height="4" fill="#f0c43a" />
<rect x="1475" y="460" width="2" height="8" fill="#f0c43a" />
<rect x="1481" y="460" width="2" height="8" fill="#f0c43a" />
<rect x="1477" y="462" width="4" height="4" fill="#f0c43a" />
<path d="M389,184 H429 Q431,184 431,186 V226 Q431,228 429,228 H389 Q387,228 387,226 V186 Q387,184 389,184 Z M391,188 V224 H427 V188 Z" fill="#37b2b8" fill-rule="evenodd" fill-opacity="1"/>
<path d="M391,188 H427 V224 H391 Z M393,190 V222 H425 V190 Z" fill="#0f0f0f" fill-rule="evenodd" fill-opacity="0.75"/>
<rect x="393" y="190" width="32" height="32" fill="#2fb1b1" fill-opacity="0.4"/>
<path d="M965,184 H1005 Q1007,184 1007,186 V226 Q1007,228 1005,228 H965 Q963,228 963,226 V186 Q963,184 965,184 Z M967,188 V224 H1003 V188 Z" fill="#37b2b8" fill-rule="evenodd" fill-opacity="1"/>
<path d="M967,188 H1003 V224 H967 Z M969,190 V222 H1001 V190 Z" fill="#0f0f0f" fill-rule="evenodd" fill-opacity="0.75"/>
<rect x="969" y="190" width="32" height="32" fill="#2fb1b1" fill-opacity="0.4"/>
<path d="M533,328 H573 Q575,328 575,330 V370 Q575,372 573,372 H533 Q531,372 531,370 V330 Q531,328 533,328 Z M535,332 V368 H571 V332 Z" fill="#37b2b8" fill-rule="evenodd" fill-opacity="1"/>
<path d="M535,332 H571 V368 H535 Z M537,334 V366 H569 V334 Z" fill="#0f0f0f" fill-rule="evenodd" fill-opacity="0.75"/>
<rect x="537" y="334" width="32" height="32" fill="#2fb1b1" fill-opacity="0.4"/>
<path d="M459,256 H503 V300 H459 Z M465,262 V294 H497 V262 Z" fill="#0f0f0f" fill-rule="evenodd" fill-opacity="1"/>
<path d="M460,256 H469 V260 H463 V266 H459 V257 Z M502,256 H493 V260 H499 V266 H503 V257 Z M460,300 H469 V296 H463 V290 H459 V299 Z M502,300 H493 V296 H499 V290 H503 V299 Z M473,256 h6 v4 h-6 Z M473,296 h6 v4 h-6 Z M459,270 v6 h4 v-6 Z M499,270 v6 h4 v-6 Z M483,256 h6 v4 h-6 Z M483,296 h6 v4 h-6 Z M459,280 v6 h4 v-6 Z M499,280 v6 h4 v-6 Z " fill="#37b2b8"/>
<rect x="465" y="262" width="32" height="32" fill="#2fb1b1" fill-opacity="0.4"/>
<path d="M891,256 H935 V300 H891 Z M897,262 V294 H929 V262 Z" fill="#0f0f0f" fill-rule="evenodd" fill-opacity="1"/>
<path d="M892,256 H901 V260 H895 V266 H891 V257 Z M934,256 H925 V260 H931 V266 H935 V257 Z M892,300 H901 V296 H895 V290 H891 V299 Z M934,300 H925 V296 H931 V290 H935 V299 Z M905,256 h6 v4 h-6 Z M905,296 h6 v4 h-6 Z M891,270 v6 h4 v-6 Z M931,270 v6 h4 v-6 Z M915,256 h6 v4 h-6 Z M915,296 h6 v4 h-6 Z M891,280 v6 h4 v-6 Z M931,280 v6 h4 v-6 Z " fill="#37b2b8"/>
<rect x="897" y="262" width="32" height="32" fill="#2fb1b1" fill-opacity="0.4"/>
<path d="M819,328 H863 V372 H819 Z M825,334 V366 H857 V334 Z" fill="#0f0f0f" fill-rule="evenodd" fill-opacity="1"/>
<path d="M820,328 H829 V332 H823 V338 H819 V329 Z M862,328 H853 V332 H859 V338 H863 V329 Z M820,372 H829 V368 H823 V362 H819 V371 Z M862,372 H853 V368 H859 V362 H863 V371 Z M833,328 h6 v4 h-6 Z M833,368 h6 v4 h-6 Z M819,342 v6 h4 v-6 Z M859,342 v6 h4 v-6 Z M843,328 h6 v4 h-6 Z M843,368 h6 v4 h-6 Z M819,352 v6 h4 v-6 Z M859,352 v6 h4 v-6 Z " fill="#37b2b8"/>
<rect x="825" y="334" width="32" height="32" fill="#2fb1b1" fill-opacity="0.4"/>
<path d="M603,400 H647 V444 H603 Z M609,406 V438 H641 V406 Z" fill="#0f0f0f" fill-rule="evenodd" fill-opacity="1"/>
<path d="M604,400 H613 V404 H607 V410 H603 V401 Z M646,400 H637 V404 H643 V410 H647 V401 Z M604,444 H613 V440 H607 V434 H603 V443 Z M646,444 H637 V440 H643 V434 H647 V443 Z M617,400 h6 v4 h-6 Z M617,440 h6 v4 h-6 Z M603,414 v6 h4 v-6 Z M643,414 v6 h4 v-6 Z M627,400 h6 v4 h-6 Z M627,440 h6 v4 h-6 Z M603,424 v6 h4 v-6 Z M643,424 v6 h4 v-6 Z " fill="#37b2b8"/>
<rect x="609" y="406" width="32" height="32" fill="#2fb1b1" fill-opacity="0.4"/>
<path d="M747,400 H791 V444 H747 Z M753,406 V438 H785 V406 Z" fill="#0f0f0f" fill-rule="evenodd" fill-opacity="1"/>
<path d="M748,400 H757 V404 H751 V410 H747 V401 Z M790,400 H781 V404 H787 V410 H791 V401 Z M748,444 H757 V440 H751 V434 H747 V443 Z M790,444 H781 V440 H787 V434 H791 V443 Z M761,400 h6 v4 h-6 Z M761,440 h6 v4 h-6 Z M747,414 v6 h4 v-6 Z M787,414 v6 h4 v-6 Z M771,400 h6 v4 h-6 Z M771,440 h6 v4 h-6 Z M747,424 v6 h4 v-6 Z M787,424 v6 h4 v-6 Z " fill="#37b2b8"/>
<rect x="753" y="406" width="32" height="32" fill="#2fb1b1" fill-opacity="0.4"/>
<path d="M747,544 H791 V588 H747 Z M753,550 V582 H785 V550 Z" fill="#0f0f0f" fill-rule="evenodd" fill-opacity="1"/>
<path d="M748,544 H757 V548 H751 V554 H747 V545 Z M790,544 H781 V548 H787 V554 H791 V545 Z M748,588 H757 V584 H751 V578 H747 V587 Z M790,588 H781 V584 H787 V578 H791 V587 Z M761,544 h6 v4 h-6 Z M761,584 h6 v4 h-6 Z M747,558 v6 h4 v-6 Z M787,558 v6 h4 v-6 Z M771,544 h6 v4 h-6 Z M771,584 h6 v4 h-6 Z M747,568 v6 h4 v-6 Z M787,568 v6 h4 v-6 Z " fill="#37b2b8"/>
<rect x="753" y="550" width="32" height="32" fill="#2fb1b1" fill-opacity="0.4"/>
<path d="M819,616 H863 V660 H819 Z M825,622 V654 H857 V622 Z" fill="#0f0f0f" fill-rule="evenodd" fill-opacity="1"/>
<path d="M820,616 H829 V620 H823 V626 H819 V617 Z M862,616 H853 V620 H859 V626 H863 V617 Z M820,660 H829 V656 H823 V650 H819 V659 Z M862,660 H853 V656 H859 V650 H863 V659 Z M833,616 h6 v4 h-6 Z M833,656 h6 v4 h-6 Z M819,630 v6 h4 v-6 Z M859,630 v6 h4 v-6 Z M843,616 h6 v4 h-6 Z M843,656 h6 v4 h-6 Z M819,640 v6 h4 v-6 Z M859,640 v6 h4 v-6 Z " fill="#37b2b8"/>
<rect x="825" y="622" width="32" height="32" fill="#2fb1b1" fill-opacity="0.4"/>
<path d="M891,688 H935 V732 H891 Z M897,694 V726 H929 V694 Z" fill="#0f0f0f" fill-rule="evenodd" fill-opacity="1"/>
<path d="M892,688 H901 V692 H895 V698 H891 V689 Z M934,688 H925 V692 H931 V698 H935 V689 Z M892,732 H901 V728 H895 V722 H891 V731 Z M934,732 H925 V728 H931 V722 H935 V731 Z M905,688 h6 v4 h-6 Z M905,728 h6 v4 h-6 Z M891,702 v6 h4 v-6 Z M931,702 v6 h4 v-6 Z M915,688 h6 v4 h-6 Z M915,728 h6 v4 h-6 Z M891,712 v6 h4 v-6 Z M931,712 v6 h4 v-6 Z " fill="#37b2b8"/>
<rect x="897" y="694" width="32" height="32" fill="#2fb1b1" fill-opacity="0.4"/>
<path d="M603,544 H647 V588 H603 Z M609,550 V582 H641 V550 Z" fill="#0f0f0f" fill-rule="evenodd" fill-opacity="1"/>
<path d="M604,544 H613 V548 H607 V554 H603 V545 Z M646,544 H637 V548 H643 V554 H647 V545 Z M604,588 H613 V584 H607 V578 H603 V587 Z M646,588 H637 V584 H643 V578 H647 V587 Z " fill="#c4c4c4"/>
<path d="M-8,-18 V-24 H-6 V-26 H-4 V-28 H4 V-26 H6 V-24 H8 V-18 H2 V-24 H-2 V-18 Z" fill="#c4c4c4" transform="translate(625,566) rotate(0)"/>
<path d="M-8,-18 V-24 H-6 V-26 H-4 V-28 H4 V-26 H6 V-24 H8 V-18 H2 V-24 H-2 V-18 Z" fill="#c4c4c4" transform="translate(625,566) rotate(90)"/>
<path d="M-8,-18 V-24 H-6 V-26 H-4 V-28 H4 V-26 H6 V-24 H8 V-18 H2 V-24 H-2 V-18 Z" fill="#c4c4c4" transform="translate(625,566) rotate(180)"/>
<path d="M-8,-18 V-24 H-6 V-26 H-4 V-28 H4 V-26 H6 V-24 H8 V-18 H2 V-24 H-2 V-18 Z" fill="#c4c4c4" transform="translate(625,566) rotate(270)"/>
<rect x="609" y="550" width="32" height="32" fill="#b8b8b8" fill-opacity="0.4"/>
<path d="M531,616 H575 V660 H531 Z M537,622 V654 H569 V622 Z" fill="#0f0f0f" fill-rule="evenodd" fill-opacity="1"/>
<path d="M532,616 H541 V620 H535 V626 H531 V617 Z M574,616 H565 V620 H571 V626 H575 V617 Z M532,660 H541 V656 H535 V650 H531 V659 Z M574,660 H565 V656 H571 V650 H575 V659 Z " fill="#c4c4c4"/>
<path d="M-8,-18 V-24 H-6 V-26 H-4 V-28 H4 V-26 H6 V-24 H8 V-18 H2 V-24 H-2 V-18 Z" fill="#c4c4c4" transform="translate(553,638) rotate(0)"/>
<path d="M-8,-18 V-24 H-6 V-26 H-4 V-28 H4 V-26 H6 V-24 H8 V-18 H2 V-24 H-2 V-18 Z" fill="#c4c4c4" transform="translate(553,638) rotate(90)"/>
<path d="M-8,-18 V-24 H-6 V-26 H-4 V-28 H4 V-26 H6 V-24 H8 V-18 H2 V-24 H-2 V-18 Z" fill="#c4c4c4" transform="translate(553,638) rotate(180)"/>
<path d="M-8,-18 V-24 H-6 V-26 H-4 V-28 H4 V-26 H6 V-24 H8 V-18 H2 V-24 H-2 V-18 Z" fill="#c4c4c4" transform="translate(553,638) rotate(270)"/>
<rect x="537" y="622" width="32" height="32" fill="#b8b8b8" fill-opacity="0.4"/>
<path d="M459,688 H503 V732 H459 Z M465,694 V726 H497 V694 Z" fill="#0f0f0f" fill-rule="evenodd" fill-opacity="1"/>
<path d="M460,688 H469 V692 H463 V698 H459 V689 Z M502,688 H493 V692 H499 V698 H503 V689 Z M460,732 H469 V728 H463 V722 H459 V731 Z M502,732 H493 V728 H499 V722 H503 V731 Z " fill="#c4c4c4"/>
<path d="M-8,-18 V-24 H-6 V-26 H-4 V-28 H4 V-26 H6 V-24 H8 V-18 H2 V-24 H-2 V-18 Z" fill="#c4c4c4" transform="translate(481,710) rotate(0)"/>
<path d="M-8,-18 V-24 H-6 V-26 H-4 V-28 H4 V-26 H6 V-24 H8 V-18 H2 V-24 H-2 V-18 Z" fill="#c4c4c4" transform="translate(481,710) rotate(90)"/>
<path d="M-8,-18 V-24 H-6 V-26 H-4 V-28 H4 V-26 H6 V-24 H8 V-18 H2 V-24 H-2 V-18 Z" fill="#c4c4c4" transform="translate(481,710) rotate(180)"/>
<path d="M-8,-18 V-24 H-6 V-26 H-4 V-28 H4 V-26 H6 V-24 H8 V-18 H2 V-24 H-2 V-18 Z" fill="#c4c4c4" transform="translate(481,710) rotate(270)"/>
<rect x="465" y="694" width="32" height="32" fill="#b8b8b8" fill-opacity="0.4"/>
<path d="M1179,616 H1223 V660 H1179 Z M1185,622 V654 H1217 V622 Z" fill="#0f0f0f" fill-rule="evenodd" fill-opacity="1"/>
<path d="M1180,616 H1189 V620 H1183 V626 H1179 V617 Z M1222,616 H1213 V620 H1219 V626 H1223 V617 Z M1180,660 H1189 V656 H1183 V650 H1179 V659 Z M1222,660 H1213 V656 H1219 V650 H1223 V659 Z " fill="#c4c4c4"/>
<path d="M-8,-18 V-24 H-6 V-26 H-4 V-28 H4 V-26 H6 V-24 H8 V-18 H2 V-24 H-2 V-18 Z" fill="#c4c4c4" transform="translate(1201,638) rotate(0)"/>
<path d="M-8,-18 V-24 H-6 V-26 H-4 V-28 H4 V-26 H6 V-24 H8 V-18 H2 V-24 H-2 V-18 Z" fill="#c4c4c4" transform="translate(1201,638) rotate(90)"/>
<path d="M-8,-18 V-24 H-6 V-26 H-4 V-28 H4 V-26 H6 V-24 H8 V-18 H2 V-24 H-2 V-18 Z" fill="#c4c4c4" transform="translate(1201,638) rotate(180)"/>
<path d="M-8,-18 V-24 H-6 V-26 H-4 V-28 H4 V-26 H6 V-24 H8 V-18 H2 V-24 H-2 V-18 Z" fill="#c4c4c4" transform="translate(1201,638) rotate(270)"/>
<rect x="1185" y="622" width="32" height="32" fill="#b8b8b8" fill-opacity="0.4"/>
<path d="M1107,688 H1151 V732 H1107 Z M1113,694 V726 H1145 V694 Z" fill="#0f0f0f" fill-rule="evenodd" fill-opacity="1"/>
<path d="M1108,688 H1117 V692 H1111 V698 H1107 V689 Z M1150,688 H1141 V692 H1147 V698 H1151 V689 Z M1108,732 H1117 V728 H1111 V722 H1107 V731 Z M1150,732 H1141 V728 H1147 V722 H1151 V731 Z " fill="#c4c4c4"/>
<path d="M-8,-18 V-24 H-6 V-26 H-4 V-28 H4 V-26 H6 V-24 H8 V-18 H2 V-24 H-2 V-18 Z" fill="#c4c4c4" transform="translate(1129,710) rotate(0)"/>
<path d="M-8,-18 V-24 H-6 V-26 H-4 V-28 H4 V-26 H6 V-24 H8 V-18 H2 V-24 H-2 V-18 Z" fill="#c4c4c4" transform="translate(1129,710) rotate(90)"/>
<path d="M-8,-18 V-24 H-6 V-26 H-4 V-28 H4 V-26 H6 V-24 H8 V-18 H2 V-24 H-2 V-18 Z" fill="#c4c4c4" transform="translate(1129,710) rotate(180)"/>
<path d="M-8,-18 V-24 H-6 V-26 H-4 V-28 H4 V-26 H6 V-24 H8 V-18 H2 V-24 H-2 V-18 Z" fill="#c4c4c4" transform="translate(1129,710) rotate(270)"/>
<rect x="1113" y="694" width="32" height="32" fill="#b8b8b8" fill-opacity="0.4"/>
<path d="M1035,760 H1079 V804 H1035 Z M1041,766 V798 H1073 V766 Z" fill="#0f0f0f" fill-rule="evenodd" fill-opacity="1"/>
<path d="M1036,760 H1045 V764 H1039 V770 H1035 V761 Z M1078,760 H1069 V764 H1075 V770 H1079 V761 Z M1036,804 H1045 V800 H1039 V794 H1035 V803 Z M1078,804 H1069 V800 H1075 V794 H1079 V803 Z " fill="#c4c4c4"/>
<path d="M-8,-18 V-24 H-6 V-26 H-4 V-28 H4 V-26 H6 V-24 H8 V-18 H2 V-24 H-2 V-18 Z" fill="#c4c4c4" transform="translate(1057,782) rotate(0)"/>
<path d="M-8,-18 V-24 H-6 V-26 H-4 V-28 H4 V-26 H6 V-24 H8 V-18 H2 V-24 H-2 V-18 Z" fill="#c4c4c4" transform="translate(1057,782) rotate(90)"/>
<path d="M-8,-18 V-24 H-6 V-26 H-4 V-28 H4 V-26 H6 V-24 H8 V-18 H2 V-24 H-2 V-18 Z" fill="#c4c4c4" transform="translate(1057,782) rotate(180)"/>
<path d="M-8,-18 V-24 H-6 V-26 H-4 V-28 H4 V-26 H6 V-24 H8 V-18 H2 V-24 H-2 V-18 Z" fill="#c4c4c4" transform="translate(1057,782) rotate(270)"/>
<rect x="1041" y="766" width="32" height="32" fill="#b8b8b8" fill-opacity="0.4"/>
<path d="M387,1048 H431 V1092 H387 Z M393,1054 V1086 H425 V1054 Z" fill="#0f0f0f" fill-rule="evenodd" fill-opacity="1"/>
<path d="M388,1048 H397 V1052 H391 V1058 H387 V1049 Z M430,1048 H421 V1052 H427 V1058 H431 V1049 Z M388,1092 H397 V1088 H391 V1082 H387 V1091 Z M430,1092 H421 V1088 H427 V1082 H431 V1091 Z " fill="#c4c4c4"/>
<path d="M-8,-18 V-24 H-6 V-26 H-4 V-28 H4 V-26 H6 V-24 H8 V-18 H2 V-24 H-2 V-18 Z" fill="#c4c4c4" transform="translate(409,1070) rotate(0)"/>
<path d="M-8,-18 V-24 H-6 V-26 H-4 V-28 H4 V-26 H6 V-24 H8 V-18 H2 V-24 H-2 V-18 Z" fill="#c4c4c4" transform="translate(409,1070) rotate(90)"/>
<path d="M-8,-18 V-24 H-6 V-26 H-4 V-28 H4 V-26 H6 V-24 H8 V-18 H2 V-24 H-2 V-18 Z" fill="#c4c4c4" transform="translate(409,1070) rotate(180)"/>
<path d="M-8,-18 V-24 H-6 V-26 H-4 V-28 H4 V-26 H6 V-24 H8 V-18 H2 V-24 H-2 V-18 Z" fill="#c4c4c4" transform="translate(409,1070) rotate(270)"/>
<rect x="393" y="1054" width="32" height="32" fill="#b8b8b8" fill-opacity="0.4"/>
<path d="M389,760 H429 Q431,760 431,762 V802 Q431,804 429,804 H389 Q387,804 387,802 V762 Q387,760 389,760 Z M391,764 V800 H427 V764 Z" fill="#adadad" fill-rule="evenodd" fill-opacity="1"/>
<path d="M391,764 H427 V800 H391 Z M393,766 V798 H425 V766 Z" fill="#0f0f0f" fill-rule="evenodd" fill-opacity="0.75"/>
<rect x="393" y="766" width="32" height="32" fill="#b8b8b8" fill-opacity="0.4"/>
<path d="M821,760 H861 Q863,760 863,762 V802 Q863,804 861,804 H821 Q819,804 819,802 V762 Q819,760 821,760 Z M823,764 V800 H859 V764 Z" fill="#adadad" fill-rule="evenodd" fill-opacity="1"/>
<path d="M823,764 H859 V800 H823 Z M825,766 V798 H857 V766 Z" fill="#0f0f0f" fill-rule="evenodd" fill-opacity="0.75"/>
<rect x="825" y="766" width="32" height="32" fill="#b8b8b8" fill-opacity="0.4"/>
<path d="M1035,256 H1079 V300 H1035 Z M1041,262 V294 H1073 V262 Z" fill="#0f0f0f" fill-rule="evenodd" fill-opacity="1"/>
<path d="M1036,256 H1045 V260 H1039 V266 H1035 V257 Z M1078,256 H1069 V260 H1075 V266 H1079 V257 Z M1036,300 H1045 V296 H1039 V290 H1035 V299 Z M1078,300 H1069 V296 H1075 V290 H1079 V299 Z M1049,256 h6 v4 h-6 Z M1049,296 h6 v4 h-6 Z M1035,270 v6 h4 v-6 Z M1075,270 v6 h4 v-6 Z M1059,256 h6 v4 h-6 Z M1059,296 h6 v4 h-6 Z M1035,280 v6 h4 v-6 Z M1075,280 v6 h4 v-6 Z " fill="#c9a13d"/>
<rect x="1041" y="262" width="32" height="32" fill="#b19045" fill-opacity="0.4"/>
<path d="M1107,328 H1151 V372 H1107 Z M1113,334 V366 H1145 V334 Z" fill="#0f0f0f" fill-rule="evenodd" fill-opacity="1"/>
<path d="M1108,328 H1117 V332 H1111 V338 H1107 V329 Z M1150,328 H1141 V332 H1147 V338 H1151 V329 Z M1108,372 H1117 V368 H1111 V362 H1107 V371 Z M1150,372 H1141 V368 H1147 V362 H1151 V371 Z M1121,328 h6 v4 h-6 Z M1121,368 h6 v4 h-6 Z M1107,342 v6 h4 v-6 Z M1147,342 v6 h4 v-6 Z M1131,328 h6 v4 h-6 Z M1131,368 h6 v4 h-6 Z M1107,352 v6 h4 v-6 Z M1147,352 v6 h4 v-6 Z " fill="#c9a13d"/>
<rect x="1113" y="334" width="32" height="32" fill="#b19045" fill-opacity="0.4"/>
<path d="M1179,400 H1223 V444 H1179 Z M1185,406 V438 H1217 V406 Z" fill="#0f0f0f" fill-rule="evenodd" fill-opacity="1"/>
<path d="M1180,400 H1189 V404 H1183 V410 H1179 V401 Z M1222,400 H1213 V404 H1219 V410 H1223 V401 Z M1180,444 H1189 V440 H1183 V434 H1179 V443 Z M1222,444 H1213 V440 H1219 V434 H1223 V443 Z M1193,400 h6 v4 h-6 Z M1193,440 h6 v4 h-6 Z M1179,414 v6 h4 v-6 Z M1219,414 v6 h4 v-6 Z M1203,400 h6 v4 h-6 Z M1203,440 h6 v4 h-6 Z M1179,424 v6 h4 v-6 Z M1219,424 v6 h4 v-6 Z " fill="#c9a13d"/>
<rect x="1185" y="406" width="32" height="32" fill="#b19045" fill-opacity="0.4"/>
<path d="M1395,400 H1439 V444 H1395 Z M1401,406 V438 H1433 V406 Z" fill="#0f0f0f" fill-rule="evenodd" fill-opacity="1"/>
<path d="M1396,400 H1405 V404 H1399 V410 H1395 V401 Z M1438,400 H1429 V404 H1435 V410 H1439 V401 Z M1396,444 H1405 V440 H1399 V434 H1395 V443 Z M1438,444 H1429 V440 H1435 V434 H1439 V443 Z M1409,400 h6 v4 h-6 Z M1409,440 h6 v4 h-6 Z M1395,414 v6 h4 v-6 Z M1435,414 v6 h4 v-6 Z M1419,400 h6 v4 h-6 Z M1419,440 h6 v4 h-6 Z M1395,424 v6 h4 v-6 Z M1435,424 v6 h4 v-6 Z " fill="#c9a13d"/>
<rect x="1401" y="406" width="32" height="32" fill="#b19045" fill-opacity="0.4"/>
<path d="M1467,688 H1511 V732 H1467 Z M1473,694 V726 H1505 V694 Z" fill="#0f0f0f" fill-rule="evenodd" fill-opacity="1"/>
<path d="M1468,688 H1477 V692 H1471 V698 H1467 V689 Z M1510,688 H1501 V692 H1507 V698 H1511 V689 Z M1468,732 H1477 V728 H1471 V722 H1467 V731 Z M1510,732 H1501 V728 H1507 V722 H1511 V731 Z M1481,688 h6 v4 h-6 Z M1481,728 h6 v4 h-6 Z M1467,702 v6 h4 v-6 Z M1507,702 v6 h4 v-6 Z M1491,688 h6 v4 h-6 Z M1491,728 h6 v4 h-6 Z M1467,712 v6 h4 v-6 Z M1507,712 v6 h4 v-6 Z " fill="#c9a13d"/>
<rect x="1473" y="694" width="32" height="32" fill="#b19045" fill-opacity="0.4"/>
<path d="M1539,760 H1583 V804 H1539 Z M1545,766 V798 H1577 V766 Z" fill="#0f0f0f" fill-rule="evenodd" fill-opacity="1"/>
<path d="M1540,760 H1549 V764 H1543 V770 H1539 V761 Z M1582,760 H1573 V764 H1579 V770 H1583 V761 Z M1540,804 H1549 V800 H1543 V794 H1539 V803 Z M1582,804 H1573 V800 H1579 V794 H1583 V803 Z M1553,760 h6 v4 h-6 Z M1553,800 h6 v4 h-6 Z M1539,774 v6 h4 v-6 Z M1579,774 v6 h4 v-6 Z M1563,760 h6 v4 h-6 Z M1563,800 h6 v4 h-6 Z M1539,784 v6 h4 v-6 Z M1579,784 v6 h4 v-6 Z " fill="#c9a13d"/>
<rect x="1545" y="766" width="32" height="32" fill="#b19045" fill-opacity="0.4"/>
<path d="M1539,256 H1583 V300 H1539 Z M1545,262 V294 H1577 V262 Z" fill="#0f0f0f" fill-rule="evenodd" fill-opacity="1"/>
<path d="M1540,256 H1549 V260 H1543 V266 H1539 V257 Z M1582,256 H1573 V260 H1579 V266 H1583 V257 Z M1540,300 H1549 V296 H1543 V290 H1539 V299 Z M1582,300 H1573 V296 H1579 V290 H1583 V299 Z M1553,256 h6 v4 h-6 Z M1553,296 h6 v4 h-6 Z M1539,270 v6 h4 v-6 Z M1579,270 v6 h4 v-6 Z M1563,256 h6 v4 h-6 Z M1563,296 h6 v4 h-6 Z M1539,280 v6 h4 v-6 Z M1579,280 v6 h4 v-6 Z " fill="#c9a13d"/>
<rect x="1545" y="262" width="32" height="32" fill="#b19045" fill-opacity="0.4"/>
<path d="M1467,328 H1511 V372 H1467 Z M1473,334 V366 H1505 V334 Z" fill="#0f0f0f" fill-rule="evenodd" fill-opacity="1"/>
<path d="M1468,328 H1477 V332 H1471 V338 H1467 V329 Z M1510,328 H1501 V332 H1507 V338 H1511 V329 Z M1468,372 H1477 V368 H1471 V362 H1467 V371 Z M1510,372 H1501 V368 H1507 V362 H1511 V371 Z M1481,328 h6 v4 h-6 Z M1481,368 h6 v4 h-6 Z M1467,342 v6 h4 v-6 Z M1507,342 v6 h4 v-6 Z M1491,328 h6 v4 h-6 Z M1491,368 h6 v4 h-6 Z M1467,352 v6 h4 v-6 Z M1507,352 v6 h4 v-6 Z " fill="#c9a13d"/>
<rect x="1473" y="334" width="32" height="32" fill="#b19045" fill-opacity="0.4"/>
<path d="M1395,616 H1439 V660 H1395 Z M1401,622 V654 H1433 V622 Z" fill="#0f0f0f" fill-rule="evenodd" fill-opacity="1"/>
<path d="M1396,616 H1405 V620 H1399 V626 H1395 V617 Z M1438,616 H1429 V620 H1435 V626 H1439 V617 Z M1396,660 H1405 V656 H1399 V650 H1395 V659 Z M1438,660 H1429 V656 H1435 V650 H1439 V659 Z M1409,616 h6 v4 h-6 Z M1409,656 h6 v4 h-6 Z M1395,630 v6 h4 v-6 Z M1435,630 v6 h4 v-6 Z M1419,616 h6 v4 h-6 Z M1419,656 h6 v4 h-6 Z M1395,640 v6 h4 v-6 Z M1435,640 v6 h4 v-6 Z " fill="#c9a13d"/>
<rect x="1401" y="622" width="32" height="32" fill="#b19045" fill-opacity="0.4"/>
<path d="M1561,262 H1545 V294 H1577 L1561,278 Z" fill="#c9a13d"/>
<path d="M1489,334 H1473 V366 H1505 L1489,350 Z" fill="#c9a13d"/>
<rect x="1401" y="622" width="16" height="16" fill="#c9a13d" />
<path d="M965,760 H1005 Q1007,760 1007,762 V802 Q1007,804 1005,804 H965 Q963,804 963,802 V762 Q963,760 965,760 Z M967,764 V800 H1003 V764 Z" fill="#37b2b8" fill-rule="evenodd" fill-opacity="1"/>
<path d="M967,764 H1003 V800 H967 Z M969,766 V798 H1001 V766 Z" fill="#0f0f0f" fill-rule="evenodd" fill-opacity="0.75"/>
<rect x="969" y="766" width="32" height="32" fill="#2fb1b1" fill-opacity="0.4"/>
<path d="M967.5,782 L999,764" stroke="#d2c4c4" stroke-width="3.6"/>
<rect x="976" y="785" width="4" height="4" fill="#d2c4c4" />
<rect x="985" y="791" width="4" height="4" fill="#d2c4c4" />
<rect x="993" y="797" width="4" height="4" fill="#d2c4c4" />
<rect x="431" y="770" width="8" height="4" fill="#c9c9c9" />
<rect x="433" y="768" width="10" height="2" fill="#c9c9c9" />
<rect x="433" y="774" width="10" height="2" fill="#c9c9c9" />
<text transform="translate(430,839) skewX(-8) scale(1,1.12)" font-size="31" letter-spacing="1.0" fill="#d6d6d6" stroke="#d6d6d6" stroke-width="0.2">Arp Seq 1</text>
<text transform="translate(1078,839) skewX(-8) scale(1,1.12)" font-size="31" letter-spacing="1.0" fill="#d6d6d6" stroke="#d6d6d6" stroke-width="0.2">Arp Seq 2</text>
<rect x="0" y="0" width="1920" height="2" fill="#0b5a6e" />
<rect x="1913" y="0" width="1" height="1080" fill="#0b5a6e" />
<rect x="1914" y="0" width="6" height="1080" fill="#05080b" />
<path d="M10.5,13.5 H195.5 L201.5,19.5 V54.5 L195.5,60.5 H10.5 L4.5,54.5 V19.5 Z" fill="#242424" stroke="#a8a8a8" stroke-width="1"/>
<text transform="translate(102,43.3) scale(1,1.06)" font-size="16.8" fill="#f2f2f2" stroke="#f2f2f2" stroke-width="0.5" text-anchor="middle" font-style="normal" >Main Menu (Esc)</text>
<path d="M209.5,12.5 H1546.5 L1552.5,18.5 V55.5 L1546.5,61.5 H209.5 L203.5,55.5 V18.5 Z" fill="#242424" stroke="#a8a8a8" stroke-width="1"/>
<path d="M263,20 H293 Q295,20 295,22 V52 Q295,54 293,54 H263 Q261,54 261,52 V22 Q261,20 263,20 Z M267,24 L265,26 V48 L267,50 H289 L291,48 V26 L289,24 Z" fill="#959595" fill-rule="evenodd"/>
<path d="M311.5,21 L344.5,37 L311.5,53 Z" fill="none" stroke="#86d41c" stroke-width="5" stroke-linejoin="round"/>
<text transform="translate(627,43.4) scale(1,1.06)" font-size="16.8" fill="#f2f2f2" stroke="#f2f2f2" stroke-width="0.5" text-anchor="middle" font-style="normal" >Performance</text>
<text transform="translate(850,27.8) scale(1,1.06)" font-size="15" fill="#e6e6e6" stroke="#e6e6e6" stroke-width="0.25" text-anchor="middle" font-style="normal" >Tempo</text>
<rect x="803.5" y="37.5" width="94" height="21" fill="#121212" stroke="#a8a8a8" stroke-width="1"/>
<text transform="translate(814,53) scale(1,1.06)" font-size="15" fill="#f0f0f0" stroke="#f0f0f0" stroke-width="0.25" text-anchor="start" font-style="normal" >80</text>
<path d="M883.5,45 L889,39.5 L894.5,45 M883.5,50.5 L889,56 L894.5,50.5" fill="none" stroke="#a8a8a8" stroke-width="1.2"/>
<path d="M884,45.5 H894 M884,50 H894" fill="none" stroke="#a8a8a8" stroke-width="1"/>
<path d="M918.5,15.5 H992.5 L999.5,22.5 V51.5 L992.5,58.5 H918.5 L911.5,51.5 V22.5 Z" fill="#242424" stroke="#a8a8a8" stroke-width="1"/>
<text transform="translate(955,43.2) scale(1,1.06)" font-size="16.8" fill="#f2f2f2" stroke="#f2f2f2" stroke-width="0.5" text-anchor="middle" font-style="normal" >Tap</text>
<text transform="translate(1050,28.9) scale(1,1.06)" font-size="15" fill="#e6e6e6" stroke="#e6e6e6" stroke-width="0.25" text-anchor="middle" font-style="normal" >Scale</text>
<path d="M1115.5,13.5 H1195.5 L1201.5,19.5 V29.5 L1195.5,35.5 H1115.5 L1109.5,29.5 V19.5 Z" fill="#242424" stroke="#a8a8a8" stroke-width="1"/>
<text transform="translate(1124,30.3) scale(1,1.06)" font-size="16.8" fill="#f0f0f0" stroke="#f0f0f0" stroke-width="0.25" text-anchor="start" font-style="normal" >C</text>
<path d="M1010.5,38.5 H1195.5 L1201.5,44.5 V54.5 L1195.5,60.5 H1010.5 L1004.5,54.5 V44.5 Z" fill="#242424" stroke="#a8a8a8" stroke-width="1"/>
<text transform="translate(1019,55.6) scale(1,1.06)" font-size="16.8" fill="#f0f0f0" stroke="#f0f0f0" stroke-width="0.25" text-anchor="start" font-style="normal" >Aeolian</text>
<text transform="translate(1377.5,25.6) scale(1,1.06)" font-size="15" fill="#e6e6e6" stroke="#e6e6e6" stroke-width="0.25" text-anchor="middle" font-style="normal" >Grid Size/Beat Subdivision</text>
<rect x="1271.5" y="37.5" width="51" height="21" fill="#121212" stroke="#a8a8a8" stroke-width="1"/>
<text transform="translate(1281,52.7) scale(1,1.06)" font-size="15" fill="#f0f0f0" stroke="#f0f0f0" stroke-width="0.25" text-anchor="start" font-style="normal" >4</text>
<path d="M1308.5,45 L1314,39.5 L1319.5,45 M1308.5,50.5 L1314,56 L1319.5,50.5" fill="none" stroke="#a8a8a8" stroke-width="1.2"/>
<path d="M1309,45.5 H1319 M1309,50 H1319" fill="none" stroke="#a8a8a8" stroke-width="1"/>
<text transform="translate(1377.5,54.5) scale(1,1.06)" font-size="16.8" fill="#f0f0f0" stroke="#f0f0f0" stroke-width="0.5" text-anchor="middle" font-style="normal" >/</text>
<path d="M1440.5,38.5 H1489.5 L1495.5,44.5 V53.5 L1489.5,59.5 H1440.5 L1434.5,53.5 V44.5 Z" fill="#242424" stroke="#a8a8a8" stroke-width="1"/>
<text transform="translate(1453.5,55.7) scale(1,1.06)" font-size="15" fill="#f0f0f0" stroke="#f0f0f0" stroke-width="0.25" text-anchor="middle" font-style="normal" >8</text>
<text transform="translate(1702,42) scale(1,1.06)" font-size="15" fill="#9a9a9a" stroke="#9a9a9a" stroke-width="0.25" text-anchor="middle" font-style="italic" >Alpha - 0.1.4</text>
<path d="M10.5,62.5 H195.5 L202.5,69.5 V504.5 L195.5,511.5 H10.5 L3.5,504.5 V69.5 Z" fill="#242424" stroke="#a8a8a8" stroke-width="1"/>
<text transform="translate(103,83) scale(1,1.06)" font-size="16.3" fill="#f2f2f2" stroke="#f2f2f2" stroke-width="0.25" text-anchor="middle" font-style="normal" >Toolbox</text>
<path d="M19.5,153.5 H186.5 M13,146.5 L19.5,153.5 L13,160.5 M193,146.5 L186.5,153.5 L193,160.5" stroke="#a0a0a0" stroke-width="1.2" fill="none"/>
<path d="M19.5,225.5 H186.5 M13,218.5 L19.5,225.5 L13,232.5 M193,218.5 L186.5,225.5 L193,232.5" stroke="#a0a0a0" stroke-width="1.2" fill="none"/>
<path d="M19.5,401.5 H186.5 M13,394.5 L19.5,401.5 L13,408.5 M193,394.5 L186.5,401.5 L193,408.5" stroke="#a0a0a0" stroke-width="1.2" fill="none"/>
<path d="M24,241.5 H182 L187,246.5 V259.5 L182,264.5 H24 L19,259.5 V246.5 Z" fill="#070707"/>
<text transform="translate(103,259.0) scale(1,1.06)" font-size="16.8" fill="#f2f2f2" stroke="#f2f2f2" stroke-width="0.5" text-anchor="middle" font-style="normal" >Note Names</text>
<path d="M24,271.5 H182 L187,276.5 V289.5 L182,294.5 H24 L19,289.5 V276.5 Z" fill="#070707"/>
<text transform="translate(103,289.0) scale(1,1.06)" font-size="16.8" fill="#f2f2f2" stroke="#f2f2f2" stroke-width="0.5" text-anchor="middle" font-style="normal" >Channels</text>
<path d="M24,301.5 H182 L187,306.5 V319.5 L182,324.5 H24 L19,319.5 V306.5 Z" fill="#070707"/>
<text transform="translate(103,319.0) scale(1,1.06)" font-size="16.8" fill="#f2f2f2" stroke="#f2f2f2" stroke-width="0.5" text-anchor="middle" font-style="normal" >Path Weight</text>
<path d="M24,331.5 H182 L187,336.5 V349.5 L182,354.5 H24 L19,349.5 V336.5 Z" fill="#070707"/>
<text transform="translate(103,349.0) scale(1,1.06)" font-size="16.8" fill="#8a8a8a" stroke="#8a8a8a" stroke-width="0.5" text-anchor="middle" font-style="normal" >Quantize</text>
<path d="M24.5,361.5 H181.5 L187.5,367.5 V378.5 L181.5,384.5 H24.5 L18.5,378.5 V367.5 Z" fill="#393939" stroke="#dcdcdc" stroke-width="1.2"/>
<text transform="translate(103,379.0) scale(1,1.06)" font-size="16.8" fill="#f2f2f2" stroke="#f2f2f2" stroke-width="0.5" text-anchor="middle" font-style="normal" >Snapping</text>
<path d="M24,417.5 H182 L187,422.5 V435.5 L182,440.5 H24 L19,435.5 V422.5 Z" fill="#070707"/>
<text transform="translate(103,435.0) scale(1,1.06)" font-size="16.8" fill="#f2f2f2" stroke="#f2f2f2" stroke-width="0.5" text-anchor="middle" font-style="normal" >Send MIDI Clock</text>
<path d="M24,447.5 H182 L187,452.5 V465.5 L182,470.5 H24 L19,465.5 V452.5 Z" fill="#070707"/>
<text transform="translate(103,465.0) scale(1,1.06)" font-size="16.8" fill="#f2f2f2" stroke="#f2f2f2" stroke-width="0.5" text-anchor="middle" font-style="normal" >MIDI Panic</text>
<path d="M24,477.5 H182 L187,482.5 V495.5 L182,500.5 H24 L19,495.5 V482.5 Z" fill="#070707"/>
<text transform="translate(103,495.0) scale(1,1.06)" font-size="16.8" fill="#f2f2f2" stroke="#f2f2f2" stroke-width="0.5" text-anchor="middle" font-style="normal" >Internal Synth</text>
<path d="M34,97 H68 L71,100 V134 L68,137 H34 L31,134 V100 Z M41,107 V127 H61 V107 Z" fill="#d6bb93" fill-rule="evenodd"/>
<path d="M34.5,104 V130 M34,103.5 H68 V131 H34" fill="none" stroke="#a7825a" stroke-width="0"/>
<rect x="36" y="102" width="30" height="30" fill="none" stroke="#a4845b" stroke-width="3"/>
<path d="M103,101.5 V132.5 M87.5,117 H118.5" stroke="#53709a" stroke-width="9.5" stroke-linecap="round"/>
<path d="M103,100 V134 M86,117 H120" stroke="#3d4f6a" stroke-width="1" opacity="0.6"/>
<path d="M103,102 V132 M88,117 H118" stroke="#222c3c" stroke-width="3.8"/>
<path d="M146.5,105 H167 V126.5 L164.5,129 H143 V108.5 Z" fill="none" stroke="#5f7ca8" stroke-width="7.5" stroke-linejoin="miter"/>
<path d="M162.5,96.5 H170.5 L175.5,101.5 V109.5 L170.5,114.5 H162.5 L157.5,109.5 V101.5 Z" fill="#8f7248"/>
<path d="M139.5,119.5 H147.5 L152.5,124.5 V132.5 L147.5,137.5 H139.5 L134.5,132.5 V124.5 Z" fill="#357224"/>
<path d="M143,129 V108.5 L146.5,105 H175.5 M167,96.5 V126.5 L164.5,129 H134.5 M143,137.5 V129" fill="none" stroke="#1b2331" stroke-width="2.8"/><rect x="164" y="102" width="6" height="6" fill="#1b2331"/><rect x="140" y="126" width="6" height="6" fill="#1b2331"/>
<defs><linearGradient id="fadeL" x1="0" x2="1"><stop offset="0" stop-color="#8e8e8e" stop-opacity="0"/><stop offset="0.5" stop-color="#8e8e8e"/></linearGradient><linearGradient id="fadeR" x1="1" x2="0"><stop offset="0" stop-color="#8e8e8e" stop-opacity="0"/><stop offset="0.5" stop-color="#8e8e8e"/></linearGradient></defs>
<path d="M35,174 H57 L62,179 V189" fill="none" stroke="#9a9a9a" stroke-width="4.2"/>
<path d="M34,174 H57.4 L61.9,178.5 V189" fill="none" stroke="#242424" stroke-width="2"/>
<path d="M62,188 V199 L57,204 H32" fill="none" stroke="url(#fadeL)" stroke-width="3.6"/>
<path d="M37.5,169.5 L33,174 L37.5,178.5" fill="none" stroke="#9a9a9a" stroke-width="1.3"/>
<path d="M171,174 H151 L146,179 V189" fill="none" stroke="#9a9a9a" stroke-width="4.2"/>
<path d="M172,174 H150.6 L146.1,178.5 V189" fill="none" stroke="#242424" stroke-width="2"/>
<path d="M146,188 V199 L151,204 H176" fill="none" stroke="url(#fadeR)" stroke-width="3.6"/>
<path d="M170.5,169.5 L175,174 L170.5,178.5" fill="none" stroke="#9a9a9a" stroke-width="1.3"/>
<path d="M96,170 L104,177 L112,170 M104,177 V201 M96,208 L104,201 L112,208" fill="none" stroke="#a0a0a0" stroke-width="1.3"/>
<path d="M104,177 V201" stroke="#a0a0a0" stroke-width="2"/>
<path d="M209.5,1047.5 H1346.5 L1352.5,1053.5 V1065.5 L1346.5,1071.5 H209.5 L203.5,1065.5 V1053.5 Z" fill="#242424" stroke="#a8a8a8" stroke-width="1"/>
<text transform="translate(216,1065.3) scale(1,1.06)" font-size="16.8" fill="#f0f0f0" stroke="#f0f0f0" stroke-width="0.5" text-anchor="start" font-style="normal" >(X:-477 Y:-458)</text>
<path d="M415,1049 L423,1056 V1063 L415,1070 M431,1049 L423,1056 M423,1063 L431,1070" stroke="#b0b0b0" stroke-width="1.2" fill="none"/>
<path d="M979,1049 L987,1056 V1063 L979,1070 M995,1049 L987,1056 M987,1063 L995,1070" stroke="#b0b0b0" stroke-width="1.2" fill="none"/>
<text transform="translate(1009,1065.5) scale(1,1.06)" font-size="16.8" fill="#f0f0f0" stroke="#f0f0f0" stroke-width="0.5" text-anchor="start" font-style="normal" >00:00:06.692</text>
<text transform="translate(1187,1065.5) scale(1,1.06)" font-size="16.8" fill="#f0f0f0" stroke="#f0f0f0" stroke-width="0.5" text-anchor="start" font-style="normal" >3.1.4.222</text>
<path d="M1560.5,987.5 H1845.5 L1852.5,994.5 V1039.5 L1845.5,1046.5 H1560.5 L1553.5,1039.5 V994.5 Z" fill="#242424" stroke="#a8a8a8" stroke-width="1"/>
<text transform="translate(1563,1006.2) scale(1,1.06)" font-size="15.5" fill="#f0f0f0" stroke="#f0f0f0" stroke-width="0.25" text-anchor="start" font-style="normal" >Zoom</text>
<path d="M1709.5,993.5 H1798.5 L1803.5,998.5 V1006 L1798.5,1011 H1709.5 L1704.5,1006 V998.5 Z" fill="#070707"/>
<text transform="translate(1754,1007) scale(1,1.06)" font-size="15.5" fill="#f0f0f0" stroke="#f0f0f0" stroke-width="0.25" text-anchor="middle" font-style="normal" >Reset</text>
<rect x="1563.5" y="1017.5" width="279.5" height="21" fill="#141414" stroke="#a8a8a8" stroke-width="1"/>
<path d="M1829.5,1019.5 H1838.5 L1843,1024 V1032 L1838.5,1036.5 H1829.5 L1825,1032 V1024 Z" fill="#262626" stroke="#a8a8a8" stroke-width="1"/>
</svg></body></html>
